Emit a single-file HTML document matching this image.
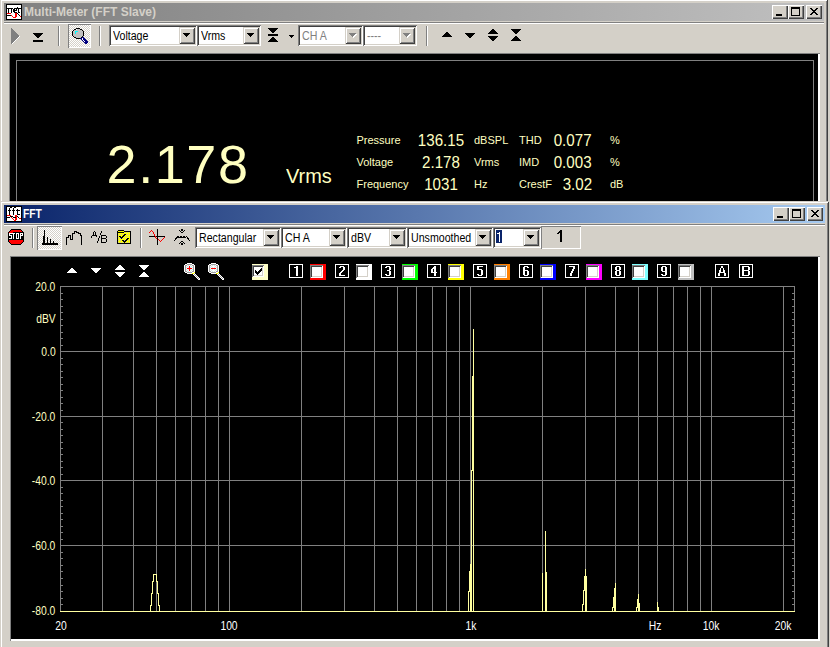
<!DOCTYPE html><html><head><meta charset="utf-8"><style>
html,body{margin:0;padding:0;}body{width:830px;height:647px;overflow:hidden;position:relative;background:#d4d0c8;font-family:"Liberation Sans",sans-serif;}
div,svg{position:absolute;box-sizing:border-box;}
</style></head><body>
<div style="left:0px;top:-1px;width:828px;height:720px;background:#d4d0c8;box-shadow:inset 1px 1px 0 #d4d0c8,inset -1px -1px 0 #404040,inset 2px 2px 0 #ffffff,inset -2px -2px 0 #808080"></div>
<div style="left:4px;top:3px;width:820px;height:18px;background:linear-gradient(to right,#808080,#c0c0c0);"></div>
<div style="left:24px;top:5.84px;font-size:12px;line-height:12px;color:#d4d0c8;font-weight:bold;white-space:nowrap;">Multi-Meter (FFT Slave)</div>
<svg style="left:6px;top:4px;" width="16" height="16" viewBox="0 0 16 16" shape-rendering="crispEdges"><rect x="0" y="0" width="16" height="1" fill="#000"/><rect x="0" y="1" width="1" height="1" fill="#000"/><rect x="1" y="1" width="14" height="1" fill="#fff"/><rect x="15" y="1" width="1" height="1" fill="#000"/><rect x="0" y="2" width="1" height="1" fill="#000"/><rect x="1" y="2" width="14" height="1" fill="#fff"/><rect x="15" y="2" width="1" height="1" fill="#000"/><rect x="0" y="3" width="1" height="1" fill="#000"/><rect x="1" y="3" width="10" height="1" fill="#fff"/><rect x="11" y="3" width="1" height="1" fill="#000"/><rect x="12" y="3" width="3" height="1" fill="#fff"/><rect x="15" y="3" width="1" height="1" fill="#000"/><rect x="0" y="4" width="7" height="1" fill="#000"/><rect x="7" y="4" width="1" height="1" fill="#fff"/><rect x="8" y="4" width="8" height="1" fill="#000"/><rect x="0" y="5" width="1" height="1" fill="#000"/><rect x="1" y="5" width="1" height="1" fill="#fff"/><rect x="2" y="5" width="1" height="1" fill="#000"/><rect x="3" y="5" width="2" height="1" fill="#fff"/><rect x="5" y="5" width="1" height="1" fill="#000"/><rect x="6" y="5" width="1" height="1" fill="#fff"/><rect x="7" y="5" width="2" height="1" fill="#000"/><rect x="9" y="5" width="1" height="1" fill="#fff"/><rect x="10" y="5" width="1" height="1" fill="#000"/><rect x="11" y="5" width="1" height="1" fill="#fff"/><rect x="12" y="5" width="1" height="1" fill="#000"/><rect x="13" y="5" width="2" height="1" fill="#fff"/><rect x="15" y="5" width="1" height="1" fill="#000"/><rect x="0" y="6" width="1" height="1" fill="#000"/><rect x="1" y="6" width="1" height="1" fill="#fff"/><rect x="2" y="6" width="1" height="1" fill="#000"/><rect x="3" y="6" width="2" height="1" fill="#fff"/><rect x="5" y="6" width="1" height="1" fill="#000"/><rect x="6" y="6" width="1" height="1" fill="#fff"/><rect x="7" y="6" width="4" height="1" fill="#000"/><rect x="11" y="6" width="1" height="1" fill="#fff"/><rect x="12" y="6" width="1" height="1" fill="#000"/><rect x="13" y="6" width="2" height="1" fill="#fff"/><rect x="15" y="6" width="1" height="1" fill="#000"/><rect x="0" y="7" width="1" height="1" fill="#000"/><rect x="1" y="7" width="1" height="1" fill="#fff"/><rect x="2" y="7" width="1" height="1" fill="#000"/><rect x="3" y="7" width="2" height="1" fill="#fff"/><rect x="5" y="7" width="1" height="1" fill="#000"/><rect x="6" y="7" width="1" height="1" fill="#fff"/><rect x="7" y="7" width="2" height="1" fill="#000"/><rect x="9" y="7" width="3" height="1" fill="#fff"/><rect x="12" y="7" width="1" height="1" fill="#000"/><rect x="13" y="7" width="2" height="1" fill="#fff"/><rect x="15" y="7" width="1" height="1" fill="#000"/><rect x="0" y="8" width="1" height="1" fill="#000"/><rect x="1" y="8" width="1" height="1" fill="#fff"/><rect x="2" y="8" width="1" height="1" fill="#000"/><rect x="3" y="8" width="2" height="1" fill="#fff"/><rect x="5" y="8" width="1" height="1" fill="#000"/><rect x="6" y="8" width="2" height="1" fill="#fff"/><rect x="8" y="8" width="3" height="1" fill="#000"/><rect x="11" y="8" width="1" height="1" fill="#fff"/><rect x="12" y="8" width="2" height="1" fill="#000"/><rect x="14" y="8" width="1" height="1" fill="#fff"/><rect x="15" y="8" width="1" height="1" fill="#000"/><rect x="0" y="9" width="1" height="1" fill="#000"/><rect x="1" y="9" width="4" height="1" fill="#f00"/><rect x="5" y="9" width="4" height="1" fill="#fff"/><rect x="9" y="9" width="2" height="1" fill="#f00"/><rect x="11" y="9" width="1" height="1" fill="#000"/><rect x="12" y="9" width="3" height="1" fill="#fff"/><rect x="15" y="9" width="1" height="1" fill="#000"/><rect x="0" y="10" width="1" height="1" fill="#000"/><rect x="1" y="10" width="8" height="1" fill="#fff"/><rect x="9" y="10" width="2" height="1" fill="#f00"/><rect x="11" y="10" width="1" height="1" fill="#fff"/><rect x="12" y="10" width="1" height="1" fill="#000"/><rect x="13" y="10" width="2" height="1" fill="#fff"/><rect x="15" y="10" width="1" height="1" fill="#000"/><rect x="0" y="11" width="5" height="1" fill="#000"/><rect x="5" y="11" width="1" height="1" fill="#f00"/><rect x="6" y="11" width="3" height="1" fill="#fff"/><rect x="9" y="11" width="2" height="1" fill="#f00"/><rect x="11" y="11" width="2" height="1" fill="#fff"/><rect x="13" y="11" width="1" height="1" fill="#000"/><rect x="14" y="11" width="1" height="1" fill="#fff"/><rect x="15" y="11" width="1" height="1" fill="#000"/><rect x="0" y="12" width="1" height="1" fill="#000"/><rect x="1" y="12" width="5" height="1" fill="#fff"/><rect x="6" y="12" width="1" height="1" fill="#f00"/><rect x="7" y="12" width="2" height="1" fill="#fff"/><rect x="9" y="12" width="2" height="1" fill="#f00"/><rect x="11" y="12" width="3" height="1" fill="#fff"/><rect x="14" y="12" width="1" height="1" fill="#f00"/><rect x="15" y="12" width="1" height="1" fill="#000"/><rect x="0" y="13" width="1" height="1" fill="#000"/><rect x="1" y="13" width="6" height="1" fill="#fff"/><rect x="7" y="13" width="3" height="1" fill="#f00"/><rect x="10" y="13" width="5" height="1" fill="#fff"/><rect x="15" y="13" width="1" height="1" fill="#000"/><rect x="0" y="14" width="1" height="1" fill="#000"/><rect x="1" y="14" width="14" height="1" fill="#fff"/><rect x="15" y="14" width="1" height="1" fill="#000"/><rect x="0" y="15" width="16" height="1" fill="#000"/></svg>
<div style="left:772px;top:5px;width:16px;height:14px;background:#d4d0c8;box-shadow:inset 1px 1px 0 #ffffff,inset -1px -1px 0 #404040,inset -2px -2px 0 #808080"></div>
<div style="left:788px;top:5px;width:16px;height:14px;background:#d4d0c8;box-shadow:inset 1px 1px 0 #ffffff,inset -1px -1px 0 #404040,inset -2px -2px 0 #808080"></div>
<div style="left:806px;top:5px;width:16px;height:14px;background:#d4d0c8;box-shadow:inset 1px 1px 0 #ffffff,inset -1px -1px 0 #404040,inset -2px -2px 0 #808080"></div>
<svg style="left:772px;top:5px;" width="16" height="14" viewBox="0 0 16 14" shape-rendering="crispEdges"><rect x="4" y="9" width="6" height="2" fill="#000"/></svg>
<svg style="left:788px;top:5px;" width="16" height="14" viewBox="0 0 16 14" shape-rendering="crispEdges"><rect x="3" y="2" width="8" height="8" fill="none" stroke="#000" stroke-width="1" transform="translate(0.5 0.5)"/><rect x="3" y="2" width="9" height="2" fill="#000"/></svg>
<svg style="left:810px;top:8px;" width="8" height="7" viewBox="0 0 8 7" shape-rendering="crispEdges"><rect x="0" y="0" width="2" height="1" fill="#000"/><rect x="6" y="0" width="2" height="1" fill="#000"/><rect x="1" y="1" width="2" height="1" fill="#000"/><rect x="5" y="1" width="2" height="1" fill="#000"/><rect x="2" y="2" width="4" height="1" fill="#000"/><rect x="3" y="3" width="2" height="1" fill="#000"/><rect x="2" y="4" width="4" height="1" fill="#000"/><rect x="1" y="5" width="2" height="1" fill="#000"/><rect x="5" y="5" width="2" height="1" fill="#000"/><rect x="0" y="6" width="2" height="1" fill="#000"/><rect x="6" y="6" width="2" height="1" fill="#000"/></svg>
<div style="left:4px;top:22px;width:820px;height:1px;background:#808080;"></div>
<div style="left:4px;top:23px;width:820px;height:1px;background:#ffffff;"></div>
<svg style="left:11px;top:28px;" width="10" height="16" viewBox="0 0 10 16" shape-rendering="crispEdges"><rect x="0" y="0" width="1" height="1" fill="#808080"/><rect x="0" y="1" width="2" height="1" fill="#808080"/><rect x="0" y="2" width="3" height="1" fill="#808080"/><rect x="0" y="3" width="4" height="1" fill="#808080"/><rect x="0" y="4" width="5" height="1" fill="#808080"/><rect x="0" y="5" width="6" height="1" fill="#808080"/><rect x="0" y="6" width="7" height="1" fill="#808080"/><rect x="0" y="7" width="8" height="1" fill="#808080"/><rect x="0" y="8" width="8" height="1" fill="#808080"/><rect x="8" y="8" width="1" height="1" fill="#fff"/><rect x="0" y="9" width="7" height="1" fill="#808080"/><rect x="7" y="9" width="1" height="1" fill="#fff"/><rect x="0" y="10" width="6" height="1" fill="#808080"/><rect x="6" y="10" width="1" height="1" fill="#fff"/><rect x="0" y="11" width="5" height="1" fill="#808080"/><rect x="5" y="11" width="1" height="1" fill="#fff"/><rect x="0" y="12" width="4" height="1" fill="#808080"/><rect x="4" y="12" width="1" height="1" fill="#fff"/><rect x="0" y="13" width="3" height="1" fill="#808080"/><rect x="3" y="13" width="1" height="1" fill="#fff"/><rect x="0" y="14" width="2" height="1" fill="#808080"/><rect x="2" y="14" width="1" height="1" fill="#fff"/><rect x="0" y="15" width="1" height="1" fill="#808080"/><rect x="1" y="15" width="1" height="1" fill="#fff"/></svg>
<svg style="left:33px;top:33px;" width="10" height="5" viewBox="0 0 10 5" shape-rendering="crispEdges"><rect x="0" y="0" width="10" height="1" fill="#000"/><rect x="1" y="1" width="8" height="1" fill="#000"/><rect x="2" y="2" width="6" height="1" fill="#000"/><rect x="3" y="3" width="4" height="1" fill="#000"/><rect x="4" y="4" width="2" height="1" fill="#000"/></svg>
<div style="left:33px;top:40px;width:10px;height:2px;background:#000;"></div>
<div style="left:58px;top:26px;width:1px;height:20px;background:#808080;"></div>
<div style="left:59px;top:26px;width:1px;height:20px;background:#ffffff;"></div>
<div style="left:68px;top:24px;width:23px;height:24px;background-color:#fff;background-image:repeating-conic-gradient(#d4d0c8 0 25%,#fff 0 50%);background-size:2px 2px;box-shadow:inset 1px 1px 0 #808080,inset -1px -1px 0 #ffffff"></div>
<svg style="left:68px;top:24px;" width="24" height="20" viewBox="0 0 24 20" shape-rendering="crispEdges"><rect x="8" y="4" width="4" height="1" fill="#000"/><rect x="6" y="5" width="2" height="1" fill="#000"/><rect x="8" y="5" width="1" height="1" fill="#fff"/><rect x="9" y="5" width="3" height="1" fill="#c0c0c0"/><rect x="12" y="5" width="2" height="1" fill="#000"/><rect x="5" y="6" width="1" height="1" fill="#000"/><rect x="6" y="6" width="8" height="1" fill="#c0c0c0"/><rect x="14" y="6" width="1" height="1" fill="#000"/><rect x="4" y="7" width="1" height="1" fill="#000"/><rect x="5" y="7" width="2" height="1" fill="#c0c0c0"/><rect x="7" y="7" width="3" height="1" fill="#0ff"/><rect x="10" y="7" width="5" height="1" fill="#c0c0c0"/><rect x="15" y="7" width="1" height="1" fill="#000"/><rect x="4" y="8" width="1" height="1" fill="#000"/><rect x="5" y="8" width="2" height="1" fill="#c0c0c0"/><rect x="7" y="8" width="1" height="1" fill="#0ff"/><rect x="8" y="8" width="7" height="1" fill="#c0c0c0"/><rect x="15" y="8" width="1" height="1" fill="#000"/><rect x="4" y="9" width="1" height="1" fill="#000"/><rect x="5" y="9" width="2" height="1" fill="#c0c0c0"/><rect x="7" y="9" width="1" height="1" fill="#0ff"/><rect x="8" y="9" width="7" height="1" fill="#c0c0c0"/><rect x="15" y="9" width="1" height="1" fill="#000"/><rect x="4" y="10" width="1" height="1" fill="#000"/><rect x="5" y="10" width="10" height="1" fill="#c0c0c0"/><rect x="15" y="10" width="1" height="1" fill="#000"/><rect x="4" y="11" width="1" height="1" fill="#000"/><rect x="5" y="11" width="10" height="1" fill="#c0c0c0"/><rect x="15" y="11" width="1" height="1" fill="#000"/><rect x="5" y="12" width="1" height="1" fill="#000"/><rect x="6" y="12" width="8" height="1" fill="#c0c0c0"/><rect x="14" y="12" width="1" height="1" fill="#000"/><rect x="6" y="13" width="2" height="1" fill="#000"/><rect x="8" y="13" width="5" height="1" fill="#c0c0c0"/><rect x="13" y="13" width="1" height="1" fill="#000"/><rect x="14" y="13" width="2" height="1" fill="#000080"/><rect x="8" y="14" width="4" height="1" fill="#000"/><rect x="12" y="14" width="2" height="1" fill="#000080"/><rect x="14" y="14" width="1" height="1" fill="#fff"/><rect x="15" y="14" width="2" height="1" fill="#000080"/><rect x="13" y="15" width="1" height="1" fill="#000080"/><rect x="14" y="15" width="1" height="1" fill="#fff"/><rect x="15" y="15" width="3" height="1" fill="#000080"/><rect x="14" y="16" width="1" height="1" fill="#000080"/><rect x="15" y="16" width="1" height="1" fill="#fff"/><rect x="16" y="16" width="3" height="1" fill="#000080"/><rect x="15" y="17" width="1" height="1" fill="#000080"/><rect x="16" y="17" width="1" height="1" fill="#fff"/><rect x="17" y="17" width="3" height="1" fill="#000080"/><rect x="16" y="18" width="4" height="1" fill="#000080"/><rect x="17" y="19" width="2" height="1" fill="#000080"/></svg>
<div style="left:99px;top:26px;width:1px;height:20px;background:#808080;"></div>
<div style="left:100px;top:26px;width:1px;height:20px;background:#ffffff;"></div>
<div style="left:109px;top:25px;width:88px;height:21px;background:#fff;box-shadow:inset 1px 1px 0 #808080,inset -1px -1px 0 #ffffff,inset 2px 2px 0 #404040,inset -2px -2px 0 #d4d0c8"></div>
<div style="left:179px;top:27px;width:16px;height:17px;background:#d4d0c8;box-shadow:inset 1px 1px 0 #d4d0c8,inset -1px -1px 0 #404040,inset 2px 2px 0 #ffffff,inset -2px -2px 0 #808080"></div>
<svg style="left:183px;top:33px;" width="9" height="6" viewBox="0 0 9 6" shape-rendering="crispEdges"><path d="M0 0h7v1h-1v1h-1v1h-1v1h-1v-1h-1v-1h-1v-1h-1z" fill="#000"/></svg>
<div style="left:113px;top:29.84px;font-size:12px;line-height:12px;color:#000;font-weight:normal;white-space:nowrap;transform:scaleX(.885);transform-origin:0 50%">Voltage</div>
<div style="left:197px;top:25px;width:64px;height:21px;background:#fff;box-shadow:inset 1px 1px 0 #808080,inset -1px -1px 0 #ffffff,inset 2px 2px 0 #404040,inset -2px -2px 0 #d4d0c8"></div>
<div style="left:243px;top:27px;width:16px;height:17px;background:#d4d0c8;box-shadow:inset 1px 1px 0 #d4d0c8,inset -1px -1px 0 #404040,inset 2px 2px 0 #ffffff,inset -2px -2px 0 #808080"></div>
<svg style="left:247px;top:33px;" width="9" height="6" viewBox="0 0 9 6" shape-rendering="crispEdges"><path d="M0 0h7v1h-1v1h-1v1h-1v1h-1v-1h-1v-1h-1v-1h-1z" fill="#000"/></svg>
<div style="left:201px;top:29.84px;font-size:12px;line-height:12px;color:#000;font-weight:normal;white-space:nowrap;transform:scaleX(.885);transform-origin:0 50%">Vrms</div>
<svg style="left:268px;top:28px;" width="10" height="5" viewBox="0 0 10 5" shape-rendering="crispEdges"><rect x="0" y="0" width="10" height="1" fill="#000"/><rect x="1" y="1" width="8" height="1" fill="#000"/><rect x="2" y="2" width="6" height="1" fill="#000"/><rect x="3" y="3" width="4" height="1" fill="#000"/><rect x="4" y="4" width="2" height="1" fill="#000"/></svg>
<div style="left:268px;top:34px;width:10px;height:2px;background:#000;"></div>
<svg style="left:268px;top:37px;" width="10" height="5" viewBox="0 0 10 5" shape-rendering="crispEdges"><rect x="4" y="0" width="2" height="1" fill="#000"/><rect x="3" y="1" width="4" height="1" fill="#000"/><rect x="2" y="2" width="6" height="1" fill="#000"/><rect x="1" y="3" width="8" height="1" fill="#000"/><rect x="0" y="4" width="10" height="1" fill="#000"/></svg>
<svg style="left:289px;top:35px;" width="5" height="3" viewBox="0 0 5 3" shape-rendering="crispEdges"><rect x="0" y="0" width="5" height="1" fill="#000"/><rect x="1" y="1" width="3" height="1" fill="#000"/><rect x="2" y="2" width="1" height="1" fill="#000"/></svg>
<div style="left:298px;top:25px;width:65px;height:21px;background:#fff;box-shadow:inset 1px 1px 0 #808080,inset -1px -1px 0 #ffffff,inset 2px 2px 0 #404040,inset -2px -2px 0 #d4d0c8"></div>
<div style="left:345px;top:27px;width:16px;height:17px;background:#d4d0c8;box-shadow:inset 1px 1px 0 #d4d0c8,inset -1px -1px 0 #404040,inset 2px 2px 0 #ffffff,inset -2px -2px 0 #808080"></div>
<svg style="left:349px;top:33px;" width="9" height="6" viewBox="0 0 9 6" shape-rendering="crispEdges"><path d="M1 1h7v1h-1v1h-1v1h-1v1h-1v-1h-1v-1h-1v-1h-1z" fill="#fff"/><path d="M0 0h7v1h-1v1h-1v1h-1v1h-1v-1h-1v-1h-1v-1h-1z" fill="#808080"/></svg>
<div style="left:302px;top:29.84px;font-size:12px;line-height:12px;color:#808080;font-weight:normal;white-space:nowrap;transform:scaleX(.885);transform-origin:0 50%">CH A</div>
<div style="left:363px;top:25px;width:54px;height:21px;background:#fff;box-shadow:inset 1px 1px 0 #808080,inset -1px -1px 0 #ffffff,inset 2px 2px 0 #404040,inset -2px -2px 0 #d4d0c8"></div>
<div style="left:399px;top:27px;width:16px;height:17px;background:#d4d0c8;box-shadow:inset 1px 1px 0 #d4d0c8,inset -1px -1px 0 #404040,inset 2px 2px 0 #ffffff,inset -2px -2px 0 #808080"></div>
<svg style="left:403px;top:33px;" width="9" height="6" viewBox="0 0 9 6" shape-rendering="crispEdges"><path d="M1 1h7v1h-1v1h-1v1h-1v1h-1v-1h-1v-1h-1v-1h-1z" fill="#fff"/><path d="M0 0h7v1h-1v1h-1v1h-1v1h-1v-1h-1v-1h-1v-1h-1z" fill="#808080"/></svg>
<div style="left:367px;top:29.84px;font-size:12px;line-height:12px;color:#808080;font-weight:normal;white-space:nowrap;transform:scaleX(.885);transform-origin:0 50%">----</div>
<div style="left:426px;top:26px;width:1px;height:20px;background:#808080;"></div>
<div style="left:427px;top:26px;width:1px;height:20px;background:#ffffff;"></div>
<svg style="left:442px;top:32px;" width="10" height="5" viewBox="0 0 10 5" shape-rendering="crispEdges"><rect x="4" y="0" width="2" height="1" fill="#000"/><rect x="3" y="1" width="4" height="1" fill="#000"/><rect x="2" y="2" width="6" height="1" fill="#000"/><rect x="1" y="3" width="8" height="1" fill="#000"/><rect x="0" y="4" width="10" height="1" fill="#000"/></svg>
<svg style="left:465px;top:33px;" width="10" height="5" viewBox="0 0 10 5" shape-rendering="crispEdges"><rect x="0" y="0" width="10" height="1" fill="#000"/><rect x="1" y="1" width="8" height="1" fill="#000"/><rect x="2" y="2" width="6" height="1" fill="#000"/><rect x="3" y="3" width="4" height="1" fill="#000"/><rect x="4" y="4" width="2" height="1" fill="#000"/></svg>
<svg style="left:488px;top:29px;" width="10" height="5" viewBox="0 0 10 5" shape-rendering="crispEdges"><rect x="4" y="0" width="2" height="1" fill="#000"/><rect x="3" y="1" width="4" height="1" fill="#000"/><rect x="2" y="2" width="6" height="1" fill="#000"/><rect x="1" y="3" width="8" height="1" fill="#000"/><rect x="0" y="4" width="10" height="1" fill="#000"/></svg>
<svg style="left:488px;top:36px;" width="10" height="5" viewBox="0 0 10 5" shape-rendering="crispEdges"><rect x="0" y="0" width="10" height="1" fill="#000"/><rect x="1" y="1" width="8" height="1" fill="#000"/><rect x="2" y="2" width="6" height="1" fill="#000"/><rect x="3" y="3" width="4" height="1" fill="#000"/><rect x="4" y="4" width="2" height="1" fill="#000"/></svg>
<svg style="left:511px;top:29px;" width="10" height="5" viewBox="0 0 10 5" shape-rendering="crispEdges"><rect x="0" y="0" width="10" height="1" fill="#000"/><rect x="1" y="1" width="8" height="1" fill="#000"/><rect x="2" y="2" width="6" height="1" fill="#000"/><rect x="3" y="3" width="4" height="1" fill="#000"/><rect x="4" y="4" width="2" height="1" fill="#000"/></svg>
<svg style="left:511px;top:36px;" width="10" height="5" viewBox="0 0 10 5" shape-rendering="crispEdges"><rect x="4" y="0" width="2" height="1" fill="#000"/><rect x="3" y="1" width="4" height="1" fill="#000"/><rect x="2" y="2" width="6" height="1" fill="#000"/><rect x="1" y="3" width="8" height="1" fill="#000"/><rect x="0" y="4" width="10" height="1" fill="#000"/></svg>
<div style="left:9px;top:53px;width:811px;height:160px;background:#000;box-shadow:inset 1px 1px 0 #808080,inset -1px -1px 0 #ffffff,inset -2px -2px 0 #ffffff"></div>
<div style="left:16px;top:60px;width:798px;height:160px;border:1px solid #808080"></div>
<div style="left:106.5px;top:136.79px;font-size:54px;line-height:54px;color:#ffffc0;font-weight:normal;white-space:nowrap;letter-spacing:1.6px">2.178</div>
<div style="left:286px;top:165.22px;font-size:21px;line-height:21px;color:#ffffc0;font-weight:normal;white-space:nowrap;transform:scaleX(.95);transform-origin:0 50%">Vrms</div>
<div style="left:356.5px;top:134.69px;font-size:11px;line-height:11px;color:#ffffc0;font-weight:normal;white-space:nowrap;">Pressure</div>
<div style="left:241px;width:400px;text-align:center;top:131.61px;font-size:17px;line-height:17px;color:#ffffc0;font-weight:normal;white-space:nowrap;transform:scaleX(.89)">136.15</div>
<div style="left:474px;top:134.69px;font-size:11px;line-height:11px;color:#ffffc0;font-weight:normal;white-space:nowrap;">dBSPL</div>
<div style="left:519px;top:134.69px;font-size:11px;line-height:11px;color:#ffffc0;font-weight:normal;white-space:nowrap;">THD</div>
<div style="right:238px;top:131.61px;font-size:17px;line-height:17px;color:#ffffc0;font-weight:normal;white-space:nowrap;transform:scaleX(.89);transform-origin:100% 50%">0.077</div>
<div style="left:610px;top:134.69px;font-size:11px;line-height:11px;color:#ffffc0;font-weight:normal;white-space:nowrap;">%</div>
<div style="left:356.5px;top:156.69px;font-size:11px;line-height:11px;color:#ffffc0;font-weight:normal;white-space:nowrap;">Voltage</div>
<div style="left:241px;width:400px;text-align:center;top:153.61px;font-size:17px;line-height:17px;color:#ffffc0;font-weight:normal;white-space:nowrap;transform:scaleX(.89)">2.178</div>
<div style="left:474px;top:156.69px;font-size:11px;line-height:11px;color:#ffffc0;font-weight:normal;white-space:nowrap;">Vrms</div>
<div style="left:519px;top:156.69px;font-size:11px;line-height:11px;color:#ffffc0;font-weight:normal;white-space:nowrap;">IMD</div>
<div style="right:238px;top:153.61px;font-size:17px;line-height:17px;color:#ffffc0;font-weight:normal;white-space:nowrap;transform:scaleX(.89);transform-origin:100% 50%">0.003</div>
<div style="left:610px;top:156.69px;font-size:11px;line-height:11px;color:#ffffc0;font-weight:normal;white-space:nowrap;">%</div>
<div style="left:356.5px;top:178.69px;font-size:11px;line-height:11px;color:#ffffc0;font-weight:normal;white-space:nowrap;">Frequency</div>
<div style="left:241px;width:400px;text-align:center;top:175.61px;font-size:17px;line-height:17px;color:#ffffc0;font-weight:normal;white-space:nowrap;transform:scaleX(.89)">1031</div>
<div style="left:474px;top:178.69px;font-size:11px;line-height:11px;color:#ffffc0;font-weight:normal;white-space:nowrap;">Hz</div>
<div style="left:519px;top:178.69px;font-size:11px;line-height:11px;color:#ffffc0;font-weight:normal;white-space:nowrap;">CrestF</div>
<div style="right:238px;top:175.61px;font-size:17px;line-height:17px;color:#ffffc0;font-weight:normal;white-space:nowrap;transform:scaleX(.89);transform-origin:100% 50%">3.02</div>
<div style="left:610px;top:178.69px;font-size:11px;line-height:11px;color:#ffffc0;font-weight:normal;white-space:nowrap;">dB</div>
<div style="left:0px;top:201px;width:829px;height:520px;background:#d4d0c8;box-shadow:inset 1px 1px 0 #d4d0c8,inset -1px -1px 0 #404040,inset 2px 2px 0 #ffffff,inset -2px -2px 0 #808080"></div>
<div style="left:4px;top:205px;width:821px;height:18px;background:linear-gradient(to right,#0a246a,#a6caf0);"></div>
<div style="left:23px;top:207.84px;font-size:12px;line-height:12px;color:#fff;font-weight:bold;white-space:nowrap;transform:scaleX(.86);transform-origin:0 50%">FFT</div>
<svg style="left:6px;top:206px;" width="16" height="16" viewBox="0 0 16 16" shape-rendering="crispEdges"><rect x="0" y="0" width="16" height="1" fill="#000"/><rect x="0" y="1" width="1" height="1" fill="#000"/><rect x="1" y="1" width="3" height="1" fill="#fff"/><rect x="4" y="1" width="2" height="1" fill="#000"/><rect x="6" y="1" width="2" height="1" fill="#fff"/><rect x="8" y="1" width="2" height="1" fill="#000"/><rect x="10" y="1" width="5" height="1" fill="#fff"/><rect x="15" y="1" width="1" height="1" fill="#000"/><rect x="0" y="2" width="1" height="1" fill="#000"/><rect x="1" y="2" width="2" height="1" fill="#fff"/><rect x="3" y="2" width="1" height="1" fill="#000"/><rect x="4" y="2" width="3" height="1" fill="#fff"/><rect x="7" y="2" width="1" height="1" fill="#000"/><rect x="8" y="2" width="7" height="1" fill="#fff"/><rect x="15" y="2" width="1" height="1" fill="#000"/><rect x="0" y="3" width="1" height="1" fill="#000"/><rect x="1" y="3" width="2" height="1" fill="#fff"/><rect x="3" y="3" width="1" height="1" fill="#000"/><rect x="4" y="3" width="3" height="1" fill="#fff"/><rect x="7" y="3" width="1" height="1" fill="#000"/><rect x="8" y="3" width="3" height="1" fill="#fff"/><rect x="11" y="3" width="1" height="1" fill="#000"/><rect x="12" y="3" width="3" height="1" fill="#fff"/><rect x="15" y="3" width="1" height="1" fill="#000"/><rect x="0" y="4" width="1" height="1" fill="#000"/><rect x="1" y="4" width="1" height="1" fill="#fff"/><rect x="2" y="4" width="3" height="1" fill="#000"/><rect x="5" y="4" width="1" height="1" fill="#fff"/><rect x="6" y="4" width="3" height="1" fill="#000"/><rect x="9" y="4" width="1" height="1" fill="#fff"/><rect x="10" y="4" width="4" height="1" fill="#000"/><rect x="14" y="4" width="1" height="1" fill="#fff"/><rect x="15" y="4" width="1" height="1" fill="#000"/><rect x="0" y="5" width="1" height="1" fill="#000"/><rect x="1" y="5" width="2" height="1" fill="#fff"/><rect x="3" y="5" width="1" height="1" fill="#000"/><rect x="4" y="5" width="3" height="1" fill="#fff"/><rect x="7" y="5" width="1" height="1" fill="#000"/><rect x="8" y="5" width="3" height="1" fill="#fff"/><rect x="11" y="5" width="1" height="1" fill="#000"/><rect x="12" y="5" width="3" height="1" fill="#fff"/><rect x="15" y="5" width="1" height="1" fill="#000"/><rect x="0" y="6" width="1" height="1" fill="#000"/><rect x="1" y="6" width="2" height="1" fill="#fff"/><rect x="3" y="6" width="1" height="1" fill="#000"/><rect x="4" y="6" width="3" height="1" fill="#fff"/><rect x="7" y="6" width="1" height="1" fill="#000"/><rect x="8" y="6" width="3" height="1" fill="#fff"/><rect x="11" y="6" width="1" height="1" fill="#000"/><rect x="12" y="6" width="3" height="1" fill="#fff"/><rect x="15" y="6" width="1" height="1" fill="#000"/><rect x="0" y="7" width="1" height="1" fill="#000"/><rect x="1" y="7" width="2" height="1" fill="#fff"/><rect x="3" y="7" width="1" height="1" fill="#000"/><rect x="4" y="7" width="3" height="1" fill="#fff"/><rect x="7" y="7" width="1" height="1" fill="#000"/><rect x="8" y="7" width="3" height="1" fill="#fff"/><rect x="11" y="7" width="1" height="1" fill="#000"/><rect x="12" y="7" width="3" height="1" fill="#fff"/><rect x="15" y="7" width="1" height="1" fill="#000"/><rect x="0" y="8" width="1" height="1" fill="#000"/><rect x="1" y="8" width="2" height="1" fill="#fff"/><rect x="3" y="8" width="1" height="1" fill="#000"/><rect x="4" y="8" width="3" height="1" fill="#fff"/><rect x="7" y="8" width="1" height="1" fill="#000"/><rect x="8" y="8" width="3" height="1" fill="#fff"/><rect x="11" y="8" width="3" height="1" fill="#000"/><rect x="14" y="8" width="1" height="1" fill="#fff"/><rect x="15" y="8" width="1" height="1" fill="#000"/><rect x="0" y="9" width="1" height="1" fill="#000"/><rect x="1" y="9" width="4" height="1" fill="#f00"/><rect x="5" y="9" width="4" height="1" fill="#fff"/><rect x="9" y="9" width="2" height="1" fill="#f00"/><rect x="11" y="9" width="4" height="1" fill="#fff"/><rect x="15" y="9" width="1" height="1" fill="#000"/><rect x="0" y="10" width="1" height="1" fill="#000"/><rect x="1" y="10" width="3" height="1" fill="#fff"/><rect x="4" y="10" width="3" height="1" fill="#000"/><rect x="7" y="10" width="2" height="1" fill="#fff"/><rect x="9" y="10" width="2" height="1" fill="#f00"/><rect x="11" y="10" width="1" height="1" fill="#000"/><rect x="12" y="10" width="3" height="1" fill="#fff"/><rect x="15" y="10" width="1" height="1" fill="#000"/><rect x="0" y="11" width="4" height="1" fill="#000"/><rect x="4" y="11" width="1" height="1" fill="#fff"/><rect x="5" y="11" width="1" height="1" fill="#f00"/><rect x="6" y="11" width="1" height="1" fill="#fff"/><rect x="7" y="11" width="3" height="1" fill="#000"/><rect x="10" y="11" width="1" height="1" fill="#f00"/><rect x="11" y="11" width="1" height="1" fill="#fff"/><rect x="12" y="11" width="1" height="1" fill="#000"/><rect x="13" y="11" width="2" height="1" fill="#fff"/><rect x="15" y="11" width="1" height="1" fill="#000"/><rect x="0" y="12" width="1" height="1" fill="#000"/><rect x="1" y="12" width="5" height="1" fill="#fff"/><rect x="6" y="12" width="1" height="1" fill="#f00"/><rect x="7" y="12" width="2" height="1" fill="#fff"/><rect x="9" y="12" width="2" height="1" fill="#f00"/><rect x="11" y="12" width="2" height="1" fill="#fff"/><rect x="13" y="12" width="2" height="1" fill="#f00"/><rect x="15" y="12" width="1" height="1" fill="#000"/><rect x="0" y="13" width="1" height="1" fill="#000"/><rect x="1" y="13" width="6" height="1" fill="#fff"/><rect x="7" y="13" width="1" height="1" fill="#f00"/><rect x="8" y="13" width="1" height="1" fill="#fff"/><rect x="9" y="13" width="2" height="1" fill="#f00"/><rect x="11" y="13" width="4" height="1" fill="#fff"/><rect x="15" y="13" width="1" height="1" fill="#000"/><rect x="0" y="14" width="1" height="1" fill="#000"/><rect x="1" y="14" width="7" height="1" fill="#fff"/><rect x="8" y="14" width="2" height="1" fill="#f00"/><rect x="10" y="14" width="5" height="1" fill="#fff"/><rect x="15" y="14" width="1" height="1" fill="#000"/><rect x="0" y="15" width="16" height="1" fill="#000"/></svg>
<div style="left:773px;top:207px;width:16px;height:14px;background:#d4d0c8;box-shadow:inset 1px 1px 0 #ffffff,inset -1px -1px 0 #404040,inset -2px -2px 0 #808080"></div>
<div style="left:789px;top:207px;width:16px;height:14px;background:#d4d0c8;box-shadow:inset 1px 1px 0 #ffffff,inset -1px -1px 0 #404040,inset -2px -2px 0 #808080"></div>
<div style="left:807px;top:207px;width:16px;height:14px;background:#d4d0c8;box-shadow:inset 1px 1px 0 #ffffff,inset -1px -1px 0 #404040,inset -2px -2px 0 #808080"></div>
<svg style="left:773px;top:207px;" width="16" height="14" viewBox="0 0 16 14" shape-rendering="crispEdges"><rect x="4" y="9" width="6" height="2" fill="#000"/></svg>
<svg style="left:789px;top:207px;" width="16" height="14" viewBox="0 0 16 14" shape-rendering="crispEdges"><rect x="3" y="2" width="8" height="8" fill="none" stroke="#000" stroke-width="1" transform="translate(0.5 0.5)"/><rect x="3" y="2" width="9" height="2" fill="#000"/></svg>
<svg style="left:811px;top:210px;" width="8" height="7" viewBox="0 0 8 7" shape-rendering="crispEdges"><rect x="0" y="0" width="2" height="1" fill="#000"/><rect x="6" y="0" width="2" height="1" fill="#000"/><rect x="1" y="1" width="2" height="1" fill="#000"/><rect x="5" y="1" width="2" height="1" fill="#000"/><rect x="2" y="2" width="4" height="1" fill="#000"/><rect x="3" y="3" width="2" height="1" fill="#000"/><rect x="2" y="4" width="4" height="1" fill="#000"/><rect x="1" y="5" width="2" height="1" fill="#000"/><rect x="5" y="5" width="2" height="1" fill="#000"/><rect x="0" y="6" width="2" height="1" fill="#000"/><rect x="6" y="6" width="2" height="1" fill="#000"/></svg>
<div style="left:4px;top:224px;width:821px;height:1px;background:#808080;"></div>
<div style="left:4px;top:225px;width:821px;height:1px;background:#ffffff;"></div>
<svg style="left:6px;top:227px;" width="20" height="20" viewBox="0 0 20 20" shape-rendering="crispEdges"><rect x="5" y="2" width="10" height="1" fill="#000"/><rect x="4" y="3" width="1" height="1" fill="#000"/><rect x="5" y="3" width="10" height="1" fill="#f00"/><rect x="15" y="3" width="1" height="1" fill="#000"/><rect x="3" y="4" width="1" height="1" fill="#000"/><rect x="4" y="4" width="12" height="1" fill="#f00"/><rect x="16" y="4" width="1" height="1" fill="#000"/><rect x="2" y="5" width="1" height="1" fill="#000"/><rect x="3" y="5" width="4" height="1" fill="#f00"/><rect x="7" y="5" width="11" height="1" fill="#000"/><rect x="2" y="6" width="1" height="1" fill="#000"/><rect x="3" y="6" width="6" height="1" fill="#fff"/><rect x="9" y="6" width="1" height="1" fill="#000"/><rect x="10" y="6" width="3" height="1" fill="#fff"/><rect x="13" y="6" width="1" height="1" fill="#000"/><rect x="14" y="6" width="3" height="1" fill="#fff"/><rect x="17" y="6" width="1" height="1" fill="#000"/><rect x="2" y="7" width="1" height="1" fill="#000"/><rect x="3" y="7" width="1" height="1" fill="#fff"/><rect x="4" y="7" width="3" height="1" fill="#000"/><rect x="7" y="7" width="1" height="1" fill="#fff"/><rect x="8" y="7" width="2" height="1" fill="#000"/><rect x="10" y="7" width="1" height="1" fill="#fff"/><rect x="11" y="7" width="1" height="1" fill="#000"/><rect x="12" y="7" width="1" height="1" fill="#fff"/><rect x="13" y="7" width="1" height="1" fill="#000"/><rect x="14" y="7" width="1" height="1" fill="#fff"/><rect x="15" y="7" width="1" height="1" fill="#000"/><rect x="16" y="7" width="1" height="1" fill="#fff"/><rect x="17" y="7" width="1" height="1" fill="#000"/><rect x="2" y="8" width="1" height="1" fill="#000"/><rect x="3" y="8" width="3" height="1" fill="#fff"/><rect x="6" y="8" width="1" height="1" fill="#000"/><rect x="7" y="8" width="1" height="1" fill="#fff"/><rect x="8" y="8" width="2" height="1" fill="#000"/><rect x="10" y="8" width="1" height="1" fill="#fff"/><rect x="11" y="8" width="1" height="1" fill="#000"/><rect x="12" y="8" width="1" height="1" fill="#fff"/><rect x="13" y="8" width="1" height="1" fill="#000"/><rect x="14" y="8" width="3" height="1" fill="#fff"/><rect x="17" y="8" width="1" height="1" fill="#000"/><rect x="2" y="9" width="3" height="1" fill="#000"/><rect x="5" y="9" width="1" height="1" fill="#fff"/><rect x="6" y="9" width="1" height="1" fill="#000"/><rect x="7" y="9" width="1" height="1" fill="#fff"/><rect x="8" y="9" width="2" height="1" fill="#000"/><rect x="10" y="9" width="1" height="1" fill="#fff"/><rect x="11" y="9" width="1" height="1" fill="#000"/><rect x="12" y="9" width="1" height="1" fill="#fff"/><rect x="13" y="9" width="1" height="1" fill="#000"/><rect x="14" y="9" width="1" height="1" fill="#fff"/><rect x="15" y="9" width="3" height="1" fill="#000"/><rect x="2" y="10" width="3" height="1" fill="#000"/><rect x="5" y="10" width="1" height="1" fill="#fff"/><rect x="6" y="10" width="1" height="1" fill="#000"/><rect x="7" y="10" width="1" height="1" fill="#fff"/><rect x="8" y="10" width="2" height="1" fill="#000"/><rect x="10" y="10" width="1" height="1" fill="#fff"/><rect x="11" y="10" width="1" height="1" fill="#000"/><rect x="12" y="10" width="1" height="1" fill="#fff"/><rect x="13" y="10" width="1" height="1" fill="#000"/><rect x="14" y="10" width="1" height="1" fill="#fff"/><rect x="15" y="10" width="3" height="1" fill="#000"/><rect x="2" y="11" width="1" height="1" fill="#000"/><rect x="3" y="11" width="3" height="1" fill="#fff"/><rect x="6" y="11" width="1" height="1" fill="#000"/><rect x="7" y="11" width="1" height="1" fill="#fff"/><rect x="8" y="11" width="2" height="1" fill="#000"/><rect x="10" y="11" width="3" height="1" fill="#fff"/><rect x="13" y="11" width="1" height="1" fill="#000"/><rect x="14" y="11" width="1" height="1" fill="#fff"/><rect x="15" y="11" width="3" height="1" fill="#000"/><rect x="2" y="12" width="16" height="1" fill="#000"/><rect x="2" y="13" width="1" height="1" fill="#000"/><rect x="3" y="13" width="14" height="1" fill="#f00"/><rect x="17" y="13" width="1" height="1" fill="#000"/><rect x="2" y="14" width="1" height="1" fill="#000"/><rect x="3" y="14" width="14" height="1" fill="#f00"/><rect x="17" y="14" width="1" height="1" fill="#000"/><rect x="3" y="15" width="1" height="1" fill="#000"/><rect x="4" y="15" width="12" height="1" fill="#f00"/><rect x="16" y="15" width="1" height="1" fill="#000"/><rect x="4" y="16" width="1" height="1" fill="#000"/><rect x="5" y="16" width="10" height="1" fill="#f00"/><rect x="15" y="16" width="1" height="1" fill="#000"/><rect x="5" y="17" width="10" height="1" fill="#000"/></svg>
<div style="left:32px;top:228px;width:1px;height:20px;background:#808080;"></div>
<div style="left:33px;top:228px;width:1px;height:20px;background:#ffffff;"></div>
<div style="left:37px;top:226px;width:25px;height:24px;background-color:#fff;background-image:repeating-conic-gradient(#d4d0c8 0 25%,#fff 0 50%);background-size:2px 2px;box-shadow:inset 1px 1px 0 #808080,inset -1px -1px 0 #ffffff"></div>
<svg style="left:42px;top:229px;" width="17" height="17" viewBox="0 0 17 17" shape-rendering="crispEdges"><path d="M0 14h16v2h-16z M2 1h1v13h-2z M5 8h1v6h-1z M8 10h1v4h-1z M11 12h1v2h-1z" fill="#000"/></svg>
<svg style="left:64px;top:231px;" width="20" height="14" viewBox="0 0 20 14" shape-rendering="crispEdges"><rect x="10" y="0" width="3" height="1" fill="#000"/><rect x="10" y="1" width="1" height="1" fill="#000"/><rect x="12" y="1" width="3" height="1" fill="#000"/><rect x="8" y="2" width="3" height="1" fill="#000"/><rect x="14" y="2" width="3" height="1" fill="#000"/><rect x="8" y="3" width="1" height="1" fill="#000"/><rect x="16" y="3" width="1" height="1" fill="#000"/><rect x="4" y="4" width="3" height="1" fill="#000"/><rect x="8" y="4" width="1" height="1" fill="#000"/><rect x="16" y="4" width="2" height="1" fill="#000"/><rect x="4" y="5" width="1" height="1" fill="#000"/><rect x="6" y="5" width="1" height="1" fill="#000"/><rect x="8" y="5" width="1" height="1" fill="#000"/><rect x="17" y="5" width="1" height="1" fill="#000"/><rect x="2" y="6" width="3" height="1" fill="#000"/><rect x="6" y="6" width="1" height="1" fill="#000"/><rect x="8" y="6" width="1" height="1" fill="#000"/><rect x="17" y="6" width="1" height="1" fill="#000"/><rect x="2" y="7" width="1" height="1" fill="#000"/><rect x="6" y="7" width="1" height="1" fill="#000"/><rect x="8" y="7" width="1" height="1" fill="#000"/><rect x="17" y="7" width="1" height="1" fill="#000"/><rect x="2" y="8" width="1" height="1" fill="#000"/><rect x="6" y="8" width="3" height="1" fill="#000"/><rect x="17" y="8" width="1" height="1" fill="#000"/><rect x="2" y="9" width="1" height="1" fill="#000"/><rect x="17" y="9" width="1" height="1" fill="#000"/><rect x="2" y="10" width="1" height="1" fill="#000"/><rect x="17" y="10" width="1" height="1" fill="#000"/><rect x="2" y="11" width="1" height="1" fill="#000"/><rect x="17" y="11" width="1" height="1" fill="#000"/><rect x="2" y="12" width="1" height="1" fill="#000"/><rect x="17" y="12" width="1" height="1" fill="#000"/><rect x="2" y="13" width="1" height="1" fill="#000"/><rect x="17" y="13" width="1" height="1" fill="#000"/></svg>
<svg style="left:89px;top:231px;" width="20" height="12" viewBox="0 0 20 12" shape-rendering="crispEdges"><rect x="5" y="0" width="1" height="1" fill="#000"/><rect x="12" y="0" width="1" height="1" fill="#000"/><rect x="4" y="1" width="1" height="1" fill="#000"/><rect x="6" y="1" width="1" height="1" fill="#000"/><rect x="12" y="1" width="1" height="1" fill="#000"/><rect x="4" y="2" width="1" height="1" fill="#000"/><rect x="6" y="2" width="1" height="1" fill="#000"/><rect x="11" y="2" width="1" height="1" fill="#000"/><rect x="4" y="3" width="1" height="1" fill="#000"/><rect x="6" y="3" width="1" height="1" fill="#000"/><rect x="11" y="3" width="1" height="1" fill="#000"/><rect x="3" y="4" width="5" height="1" fill="#000"/><rect x="12" y="4" width="5" height="1" fill="#000"/><rect x="2" y="5" width="1" height="1" fill="#000"/><rect x="7" y="5" width="1" height="1" fill="#000"/><rect x="10" y="5" width="1" height="1" fill="#000"/><rect x="12" y="5" width="1" height="1" fill="#000"/><rect x="17" y="5" width="1" height="1" fill="#000"/><rect x="2" y="6" width="1" height="1" fill="#000"/><rect x="10" y="6" width="1" height="1" fill="#000"/><rect x="12" y="6" width="1" height="1" fill="#000"/><rect x="17" y="6" width="1" height="1" fill="#000"/><rect x="9" y="7" width="1" height="1" fill="#000"/><rect x="12" y="7" width="5" height="1" fill="#000"/><rect x="9" y="8" width="1" height="1" fill="#000"/><rect x="12" y="8" width="1" height="1" fill="#000"/><rect x="17" y="8" width="1" height="1" fill="#000"/><rect x="9" y="9" width="1" height="1" fill="#000"/><rect x="12" y="9" width="1" height="1" fill="#000"/><rect x="17" y="9" width="1" height="1" fill="#000"/><rect x="8" y="10" width="1" height="1" fill="#000"/><rect x="12" y="10" width="1" height="1" fill="#000"/><rect x="17" y="10" width="1" height="1" fill="#000"/><rect x="8" y="11" width="1" height="1" fill="#000"/><rect x="12" y="11" width="5" height="1" fill="#000"/></svg>
<svg style="left:114px;top:230px;" width="20" height="14" viewBox="0 0 20 14" shape-rendering="crispEdges"><rect x="4" y="0" width="6" height="1" fill="#000"/><rect x="3" y="1" width="1" height="1" fill="#000"/><rect x="4" y="1" width="6" height="1" fill="#ffff00"/><rect x="10" y="1" width="7" height="1" fill="#000"/><rect x="3" y="2" width="7" height="1" fill="#000"/><rect x="10" y="2" width="1" height="1" fill="#c8c8a0"/><rect x="11" y="2" width="1" height="1" fill="#ffff00"/><rect x="12" y="2" width="1" height="1" fill="#c8c8a0"/><rect x="13" y="2" width="1" height="1" fill="#ffff00"/><rect x="14" y="2" width="1" height="1" fill="#c8c8a0"/><rect x="15" y="2" width="1" height="1" fill="#ffff00"/><rect x="16" y="2" width="1" height="1" fill="#000"/><rect x="3" y="3" width="1" height="1" fill="#000"/><rect x="4" y="3" width="12" height="1" fill="#ffff00"/><rect x="16" y="3" width="1" height="1" fill="#000"/><rect x="3" y="4" width="1" height="1" fill="#000"/><rect x="4" y="4" width="1" height="1" fill="#c8c8a0"/><rect x="5" y="4" width="1" height="1" fill="#ffff00"/><rect x="6" y="4" width="1" height="1" fill="#c8c8a0"/><rect x="7" y="4" width="1" height="1" fill="#ffff00"/><rect x="8" y="4" width="1" height="1" fill="#c8c8a0"/><rect x="9" y="4" width="1" height="1" fill="#ffff00"/><rect x="10" y="4" width="2" height="1" fill="#000"/><rect x="12" y="4" width="1" height="1" fill="#c8c8a0"/><rect x="13" y="4" width="1" height="1" fill="#ffff00"/><rect x="14" y="4" width="1" height="1" fill="#c8c8a0"/><rect x="15" y="4" width="1" height="1" fill="#ffff00"/><rect x="16" y="4" width="1" height="1" fill="#000"/><rect x="3" y="5" width="1" height="1" fill="#000"/><rect x="4" y="5" width="5" height="1" fill="#ffff00"/><rect x="9" y="5" width="2" height="1" fill="#000"/><rect x="11" y="5" width="5" height="1" fill="#ffff00"/><rect x="16" y="5" width="1" height="1" fill="#000"/><rect x="3" y="6" width="1" height="1" fill="#000"/><rect x="4" y="6" width="1" height="1" fill="#c8c8a0"/><rect x="5" y="6" width="2" height="1" fill="#000"/><rect x="7" y="6" width="1" height="1" fill="#ffff00"/><rect x="8" y="6" width="2" height="1" fill="#000"/><rect x="10" y="6" width="1" height="1" fill="#c8c8a0"/><rect x="11" y="6" width="1" height="1" fill="#ffff00"/><rect x="12" y="6" width="1" height="1" fill="#c8c8a0"/><rect x="13" y="6" width="1" height="1" fill="#ffff00"/><rect x="14" y="6" width="1" height="1" fill="#c8c8a0"/><rect x="15" y="6" width="1" height="1" fill="#ffff00"/><rect x="16" y="6" width="1" height="1" fill="#000"/><rect x="3" y="7" width="1" height="1" fill="#000"/><rect x="4" y="7" width="2" height="1" fill="#ffff00"/><rect x="6" y="7" width="3" height="1" fill="#000"/><rect x="9" y="7" width="7" height="1" fill="#ffff00"/><rect x="16" y="7" width="1" height="1" fill="#000"/><rect x="3" y="8" width="1" height="1" fill="#000"/><rect x="4" y="8" width="1" height="1" fill="#c8c8a0"/><rect x="5" y="8" width="1" height="1" fill="#ffff00"/><rect x="6" y="8" width="1" height="1" fill="#c8c8a0"/><rect x="7" y="8" width="1" height="1" fill="#000"/><rect x="8" y="8" width="1" height="1" fill="#c8c8a0"/><rect x="9" y="8" width="1" height="1" fill="#ffff00"/><rect x="10" y="8" width="1" height="1" fill="#c8c8a0"/><rect x="11" y="8" width="1" height="1" fill="#ffff00"/><rect x="12" y="8" width="1" height="1" fill="#c8c8a0"/><rect x="13" y="8" width="2" height="1" fill="#000"/><rect x="15" y="8" width="1" height="1" fill="#ffff00"/><rect x="16" y="8" width="1" height="1" fill="#000"/><rect x="3" y="9" width="1" height="1" fill="#000"/><rect x="4" y="9" width="8" height="1" fill="#ffff00"/><rect x="12" y="9" width="2" height="1" fill="#000"/><rect x="14" y="9" width="2" height="1" fill="#ffff00"/><rect x="16" y="9" width="1" height="1" fill="#000"/><rect x="3" y="10" width="1" height="1" fill="#000"/><rect x="4" y="10" width="1" height="1" fill="#c8c8a0"/><rect x="5" y="10" width="1" height="1" fill="#ffff00"/><rect x="6" y="10" width="1" height="1" fill="#c8c8a0"/><rect x="7" y="10" width="1" height="1" fill="#ffff00"/><rect x="8" y="10" width="2" height="1" fill="#000"/><rect x="10" y="10" width="1" height="1" fill="#c8c8a0"/><rect x="11" y="10" width="2" height="1" fill="#000"/><rect x="13" y="10" width="1" height="1" fill="#ffff00"/><rect x="14" y="10" width="1" height="1" fill="#c8c8a0"/><rect x="15" y="10" width="1" height="1" fill="#ffff00"/><rect x="16" y="10" width="1" height="1" fill="#000"/><rect x="3" y="11" width="1" height="1" fill="#000"/><rect x="4" y="11" width="5" height="1" fill="#ffff00"/><rect x="9" y="11" width="3" height="1" fill="#000"/><rect x="12" y="11" width="4" height="1" fill="#ffff00"/><rect x="16" y="11" width="1" height="1" fill="#000"/><rect x="3" y="12" width="1" height="1" fill="#000"/><rect x="4" y="12" width="1" height="1" fill="#c8c8a0"/><rect x="5" y="12" width="1" height="1" fill="#ffff00"/><rect x="6" y="12" width="1" height="1" fill="#c8c8a0"/><rect x="7" y="12" width="1" height="1" fill="#ffff00"/><rect x="8" y="12" width="1" height="1" fill="#c8c8a0"/><rect x="9" y="12" width="1" height="1" fill="#ffff00"/><rect x="10" y="12" width="1" height="1" fill="#000"/><rect x="11" y="12" width="1" height="1" fill="#ffff00"/><rect x="12" y="12" width="1" height="1" fill="#c8c8a0"/><rect x="13" y="12" width="1" height="1" fill="#ffff00"/><rect x="14" y="12" width="1" height="1" fill="#c8c8a0"/><rect x="15" y="12" width="1" height="1" fill="#ffff00"/><rect x="16" y="12" width="1" height="1" fill="#000"/><rect x="3" y="13" width="14" height="1" fill="#000"/></svg>
<div style="left:140px;top:228px;width:1px;height:20px;background:#808080;"></div>
<div style="left:141px;top:228px;width:1px;height:20px;background:#ffffff;"></div>
<svg style="left:147px;top:229px;" width="20" height="16" viewBox="0 0 20 16" shape-rendering="crispEdges"><rect x="10" y="0" width="1" height="1" fill="#000"/><rect x="4" y="1" width="1" height="1" fill="#f00"/><rect x="10" y="1" width="1" height="1" fill="#000"/><rect x="3" y="2" width="1" height="1" fill="#f00"/><rect x="5" y="2" width="1" height="1" fill="#f00"/><rect x="10" y="2" width="1" height="1" fill="#000"/><rect x="2" y="3" width="1" height="1" fill="#f00"/><rect x="6" y="3" width="1" height="1" fill="#f00"/><rect x="10" y="3" width="1" height="1" fill="#000"/><rect x="6" y="4" width="1" height="1" fill="#f00"/><rect x="10" y="4" width="1" height="1" fill="#000"/><rect x="7" y="5" width="1" height="1" fill="#f00"/><rect x="10" y="5" width="1" height="1" fill="#000"/><rect x="7" y="6" width="1" height="1" fill="#f00"/><rect x="10" y="6" width="1" height="1" fill="#000"/><rect x="2" y="7" width="6" height="1" fill="#000"/><rect x="8" y="7" width="1" height="1" fill="#f00"/><rect x="9" y="7" width="9" height="1" fill="#000"/><rect x="8" y="8" width="1" height="1" fill="#f00"/><rect x="10" y="8" width="1" height="1" fill="#000"/><rect x="17" y="8" width="1" height="1" fill="#f00"/><rect x="9" y="9" width="1" height="1" fill="#f00"/><rect x="10" y="9" width="1" height="1" fill="#000"/><rect x="16" y="9" width="1" height="1" fill="#f00"/><rect x="10" y="10" width="1" height="1" fill="#000"/><rect x="11" y="10" width="1" height="1" fill="#f00"/><rect x="15" y="10" width="1" height="1" fill="#f00"/><rect x="10" y="11" width="1" height="1" fill="#000"/><rect x="12" y="11" width="1" height="1" fill="#f00"/><rect x="14" y="11" width="1" height="1" fill="#f00"/><rect x="10" y="12" width="1" height="1" fill="#000"/><rect x="13" y="12" width="1" height="1" fill="#f00"/><rect x="10" y="13" width="1" height="1" fill="#000"/><rect x="10" y="14" width="1" height="1" fill="#000"/><rect x="10" y="15" width="1" height="1" fill="#000"/></svg>
<svg style="left:172px;top:229px;" width="20" height="16" viewBox="0 0 20 16" shape-rendering="crispEdges"><rect x="9" y="0" width="2" height="1" fill="#000"/><rect x="7" y="1" width="1" height="1" fill="#000"/><rect x="9" y="1" width="2" height="1" fill="#000"/><rect x="12" y="1" width="1" height="1" fill="#000"/><rect x="8" y="2" width="1" height="1" fill="#000"/><rect x="11" y="2" width="1" height="1" fill="#000"/><rect x="9" y="3" width="2" height="1" fill="#000"/><rect x="5" y="7" width="2" height="1" fill="#000"/><rect x="8" y="7" width="2" height="1" fill="#000"/><rect x="11" y="7" width="2" height="1" fill="#000"/><rect x="14" y="7" width="1" height="1" fill="#000"/><rect x="4" y="8" width="10" height="1" fill="#000"/><rect x="15" y="8" width="1" height="1" fill="#000"/><rect x="3" y="9" width="2" height="1" fill="#000"/><rect x="15" y="9" width="2" height="1" fill="#000"/><rect x="3" y="10" width="1" height="1" fill="#000"/><rect x="16" y="10" width="1" height="1" fill="#000"/><rect x="2" y="11" width="1" height="1" fill="#000"/><rect x="17" y="11" width="1" height="1" fill="#000"/><rect x="9" y="12" width="2" height="1" fill="#000"/><rect x="8" y="13" width="1" height="1" fill="#000"/><rect x="11" y="13" width="1" height="1" fill="#000"/><rect x="7" y="14" width="1" height="1" fill="#000"/><rect x="9" y="14" width="2" height="1" fill="#000"/><rect x="12" y="14" width="1" height="1" fill="#000"/><rect x="9" y="15" width="2" height="1" fill="#000"/></svg>
<div style="left:195px;top:227px;width:86px;height:21px;background:#fff;box-shadow:inset 1px 1px 0 #808080,inset -1px -1px 0 #ffffff,inset 2px 2px 0 #404040,inset -2px -2px 0 #d4d0c8"></div>
<div style="left:263px;top:229px;width:16px;height:17px;background:#d4d0c8;box-shadow:inset 1px 1px 0 #d4d0c8,inset -1px -1px 0 #404040,inset 2px 2px 0 #ffffff,inset -2px -2px 0 #808080"></div>
<svg style="left:267px;top:235px;" width="9" height="6" viewBox="0 0 9 6" shape-rendering="crispEdges"><path d="M0 0h7v1h-1v1h-1v1h-1v1h-1v-1h-1v-1h-1v-1h-1z" fill="#000"/></svg>
<div style="left:199px;top:231.84px;font-size:12px;line-height:12px;color:#000;font-weight:normal;white-space:nowrap;transform:scaleX(.885);transform-origin:0 50%">Rectangular</div>
<div style="left:281px;top:227px;width:66px;height:21px;background:#fff;box-shadow:inset 1px 1px 0 #808080,inset -1px -1px 0 #ffffff,inset 2px 2px 0 #404040,inset -2px -2px 0 #d4d0c8"></div>
<div style="left:329px;top:229px;width:16px;height:17px;background:#d4d0c8;box-shadow:inset 1px 1px 0 #d4d0c8,inset -1px -1px 0 #404040,inset 2px 2px 0 #ffffff,inset -2px -2px 0 #808080"></div>
<svg style="left:333px;top:235px;" width="9" height="6" viewBox="0 0 9 6" shape-rendering="crispEdges"><path d="M0 0h7v1h-1v1h-1v1h-1v1h-1v-1h-1v-1h-1v-1h-1z" fill="#000"/></svg>
<div style="left:285px;top:231.84px;font-size:12px;line-height:12px;color:#000;font-weight:normal;white-space:nowrap;transform:scaleX(.885);transform-origin:0 50%">CH A</div>
<div style="left:347px;top:227px;width:60px;height:21px;background:#fff;box-shadow:inset 1px 1px 0 #808080,inset -1px -1px 0 #ffffff,inset 2px 2px 0 #404040,inset -2px -2px 0 #d4d0c8"></div>
<div style="left:389px;top:229px;width:16px;height:17px;background:#d4d0c8;box-shadow:inset 1px 1px 0 #d4d0c8,inset -1px -1px 0 #404040,inset 2px 2px 0 #ffffff,inset -2px -2px 0 #808080"></div>
<svg style="left:393px;top:235px;" width="9" height="6" viewBox="0 0 9 6" shape-rendering="crispEdges"><path d="M0 0h7v1h-1v1h-1v1h-1v1h-1v-1h-1v-1h-1v-1h-1z" fill="#000"/></svg>
<div style="left:351px;top:231.84px;font-size:12px;line-height:12px;color:#000;font-weight:normal;white-space:nowrap;transform:scaleX(.885);transform-origin:0 50%">dBV</div>
<div style="left:407px;top:227px;width:86px;height:21px;background:#fff;box-shadow:inset 1px 1px 0 #808080,inset -1px -1px 0 #ffffff,inset 2px 2px 0 #404040,inset -2px -2px 0 #d4d0c8"></div>
<div style="left:475px;top:229px;width:16px;height:17px;background:#d4d0c8;box-shadow:inset 1px 1px 0 #d4d0c8,inset -1px -1px 0 #404040,inset 2px 2px 0 #ffffff,inset -2px -2px 0 #808080"></div>
<svg style="left:479px;top:235px;" width="9" height="6" viewBox="0 0 9 6" shape-rendering="crispEdges"><path d="M0 0h7v1h-1v1h-1v1h-1v1h-1v-1h-1v-1h-1v-1h-1z" fill="#000"/></svg>
<div style="left:411px;top:231.84px;font-size:12px;line-height:12px;color:#000;font-weight:normal;white-space:nowrap;transform:scaleX(.885);transform-origin:0 50%">Unsmoothed</div>
<div style="left:493px;top:227px;width:48px;height:21px;background:#fff;box-shadow:inset 1px 1px 0 #808080,inset -1px -1px 0 #ffffff,inset 2px 2px 0 #404040,inset -2px -2px 0 #d4d0c8"></div>
<div style="left:523px;top:229px;width:16px;height:17px;background:#d4d0c8;box-shadow:inset 1px 1px 0 #d4d0c8,inset -1px -1px 0 #404040,inset 2px 2px 0 #ffffff,inset -2px -2px 0 #808080"></div>
<svg style="left:527px;top:235px;" width="9" height="6" viewBox="0 0 9 6" shape-rendering="crispEdges"><path d="M0 0h7v1h-1v1h-1v1h-1v1h-1v-1h-1v-1h-1v-1h-1z" fill="#000"/></svg>
<div style="left:496px;top:230px;width:6px;height:13px;background:#0a246a;"></div>
<svg style="left:497px;top:232px;" width="3" height="10" viewBox="0 0 3 10" shape-rendering="crispEdges"><rect x="2" y="0" width="1" height="1" fill="#fff"/><rect x="0" y="1" width="3" height="1" fill="#fff"/><rect x="2" y="2" width="1" height="1" fill="#fff"/><rect x="2" y="3" width="1" height="1" fill="#fff"/><rect x="2" y="4" width="1" height="1" fill="#fff"/><rect x="2" y="5" width="1" height="1" fill="#fff"/><rect x="2" y="6" width="1" height="1" fill="#fff"/><rect x="2" y="7" width="1" height="1" fill="#fff"/><rect x="2" y="8" width="1" height="1" fill="#fff"/><rect x="2" y="9" width="1" height="1" fill="#fff"/></svg>
<div style="left:541px;top:226px;width:40px;height:23px;box-shadow:inset 1px 1px 0 #808080,inset -1px -1px 0 #ffffff"></div>
<svg style="left:557px;top:230px;" width="5" height="12" viewBox="0 0 5 12" shape-rendering="crispEdges"><rect x="3" y="0" width="2" height="1" fill="#000"/><rect x="2" y="1" width="3" height="1" fill="#000"/><rect x="1" y="2" width="4" height="1" fill="#000"/><rect x="0" y="3" width="2" height="1" fill="#000"/><rect x="3" y="3" width="2" height="1" fill="#000"/><rect x="3" y="4" width="2" height="1" fill="#000"/><rect x="3" y="5" width="2" height="1" fill="#000"/><rect x="3" y="6" width="2" height="1" fill="#000"/><rect x="3" y="7" width="2" height="1" fill="#000"/><rect x="3" y="8" width="2" height="1" fill="#000"/><rect x="3" y="9" width="2" height="1" fill="#000"/><rect x="3" y="10" width="2" height="1" fill="#000"/><rect x="3" y="11" width="2" height="1" fill="#000"/></svg>
<div style="left:10px;top:256px;width:810px;height:385px;background:#000;box-shadow:inset 1px 1px 0 #808080,inset -1px -1px 0 #ffffff,inset -2px -2px 0 #ffffff"></div>
<svg style="left:67px;top:268px;" width="10" height="5" viewBox="0 0 10 5" shape-rendering="crispEdges"><rect x="4" y="0" width="2" height="1" fill="#fff"/><rect x="3" y="1" width="4" height="1" fill="#fff"/><rect x="2" y="2" width="6" height="1" fill="#fff"/><rect x="1" y="3" width="8" height="1" fill="#fff"/><rect x="0" y="4" width="10" height="1" fill="#fff"/></svg>
<svg style="left:91px;top:268px;" width="10" height="5" viewBox="0 0 10 5" shape-rendering="crispEdges"><rect x="0" y="0" width="10" height="1" fill="#fff"/><rect x="1" y="1" width="8" height="1" fill="#fff"/><rect x="2" y="2" width="6" height="1" fill="#fff"/><rect x="3" y="3" width="4" height="1" fill="#fff"/><rect x="4" y="4" width="2" height="1" fill="#fff"/></svg>
<svg style="left:115px;top:265px;" width="10" height="5" viewBox="0 0 10 5" shape-rendering="crispEdges"><rect x="4" y="0" width="2" height="1" fill="#fff"/><rect x="3" y="1" width="4" height="1" fill="#fff"/><rect x="2" y="2" width="6" height="1" fill="#fff"/><rect x="1" y="3" width="8" height="1" fill="#fff"/><rect x="0" y="4" width="10" height="1" fill="#fff"/></svg>
<svg style="left:115px;top:272px;" width="10" height="5" viewBox="0 0 10 5" shape-rendering="crispEdges"><rect x="0" y="0" width="10" height="1" fill="#fff"/><rect x="1" y="1" width="8" height="1" fill="#fff"/><rect x="2" y="2" width="6" height="1" fill="#fff"/><rect x="3" y="3" width="4" height="1" fill="#fff"/><rect x="4" y="4" width="2" height="1" fill="#fff"/></svg>
<svg style="left:139px;top:265px;" width="10" height="5" viewBox="0 0 10 5" shape-rendering="crispEdges"><rect x="0" y="0" width="10" height="1" fill="#fff"/><rect x="1" y="1" width="8" height="1" fill="#fff"/><rect x="2" y="2" width="6" height="1" fill="#fff"/><rect x="3" y="3" width="4" height="1" fill="#fff"/><rect x="4" y="4" width="2" height="1" fill="#fff"/></svg>
<svg style="left:139px;top:272px;" width="10" height="5" viewBox="0 0 10 5" shape-rendering="crispEdges"><rect x="4" y="0" width="2" height="1" fill="#fff"/><rect x="3" y="1" width="4" height="1" fill="#fff"/><rect x="2" y="2" width="6" height="1" fill="#fff"/><rect x="1" y="3" width="8" height="1" fill="#fff"/><rect x="0" y="4" width="10" height="1" fill="#fff"/></svg>
<svg style="left:182px;top:263px;" width="20" height="17" viewBox="0 0 20 17" shape-rendering="crispEdges"><rect x="5" y="0" width="5" height="1" fill="#ffffff"/><rect x="3" y="1" width="2" height="1" fill="#ffffff"/><rect x="5" y="1" width="5" height="1" fill="#a0a0a0"/><rect x="10" y="1" width="2" height="1" fill="#ffffff"/><rect x="2" y="2" width="1" height="1" fill="#ffffff"/><rect x="3" y="2" width="2" height="1" fill="#a0a0a0"/><rect x="5" y="2" width="1" height="1" fill="#ffffff"/><rect x="6" y="2" width="1" height="1" fill="#d0e8e8"/><rect x="7" y="2" width="1" height="1" fill="#ffffff"/><rect x="8" y="2" width="1" height="1" fill="#d0e8e8"/><rect x="9" y="2" width="1" height="1" fill="#ffffff"/><rect x="10" y="2" width="2" height="1" fill="#a0a0a0"/><rect x="12" y="2" width="1" height="1" fill="#ffffff"/><rect x="2" y="3" width="1" height="1" fill="#ffffff"/><rect x="3" y="3" width="1" height="1" fill="#a0a0a0"/><rect x="4" y="3" width="1" height="1" fill="#ffffff"/><rect x="5" y="3" width="1" height="1" fill="#d0e8e8"/><rect x="6" y="3" width="1" height="1" fill="#ffffff"/><rect x="7" y="3" width="1" height="1" fill="#ff0000"/><rect x="8" y="3" width="1" height="1" fill="#ffffff"/><rect x="9" y="3" width="1" height="1" fill="#d0e8e8"/><rect x="10" y="3" width="1" height="1" fill="#ffffff"/><rect x="11" y="3" width="1" height="1" fill="#a0a0a0"/><rect x="12" y="3" width="1" height="1" fill="#ffffff"/><rect x="2" y="4" width="1" height="1" fill="#ffffff"/><rect x="3" y="4" width="1" height="1" fill="#a0a0a0"/><rect x="4" y="4" width="1" height="1" fill="#d0e8e8"/><rect x="5" y="4" width="1" height="1" fill="#ffffff"/><rect x="6" y="4" width="1" height="1" fill="#d0e8e8"/><rect x="7" y="4" width="1" height="1" fill="#ff0000"/><rect x="8" y="4" width="1" height="1" fill="#d0e8e8"/><rect x="9" y="4" width="1" height="1" fill="#ffffff"/><rect x="10" y="4" width="1" height="1" fill="#d0e8e8"/><rect x="11" y="4" width="1" height="1" fill="#a0a0a0"/><rect x="12" y="4" width="1" height="1" fill="#ffffff"/><rect x="2" y="5" width="1" height="1" fill="#ffffff"/><rect x="3" y="5" width="1" height="1" fill="#a0a0a0"/><rect x="4" y="5" width="1" height="1" fill="#ffffff"/><rect x="5" y="5" width="5" height="1" fill="#ff0000"/><rect x="10" y="5" width="1" height="1" fill="#ffffff"/><rect x="11" y="5" width="1" height="1" fill="#a0a0a0"/><rect x="12" y="5" width="1" height="1" fill="#ffffff"/><rect x="2" y="6" width="1" height="1" fill="#ffffff"/><rect x="3" y="6" width="1" height="1" fill="#a0a0a0"/><rect x="4" y="6" width="1" height="1" fill="#d0e8e8"/><rect x="5" y="6" width="1" height="1" fill="#ffffff"/><rect x="6" y="6" width="1" height="1" fill="#d0e8e8"/><rect x="7" y="6" width="1" height="1" fill="#ff0000"/><rect x="8" y="6" width="1" height="1" fill="#d0e8e8"/><rect x="9" y="6" width="1" height="1" fill="#ffffff"/><rect x="10" y="6" width="1" height="1" fill="#d0e8e8"/><rect x="11" y="6" width="1" height="1" fill="#a0a0a0"/><rect x="12" y="6" width="1" height="1" fill="#ffffff"/><rect x="2" y="7" width="1" height="1" fill="#ffffff"/><rect x="3" y="7" width="1" height="1" fill="#a0a0a0"/><rect x="4" y="7" width="1" height="1" fill="#ffffff"/><rect x="5" y="7" width="1" height="1" fill="#d0e8e8"/><rect x="6" y="7" width="1" height="1" fill="#ffffff"/><rect x="7" y="7" width="1" height="1" fill="#ff0000"/><rect x="8" y="7" width="1" height="1" fill="#ffffff"/><rect x="9" y="7" width="1" height="1" fill="#d0e8e8"/><rect x="10" y="7" width="1" height="1" fill="#ffffff"/><rect x="11" y="7" width="1" height="1" fill="#a0a0a0"/><rect x="12" y="7" width="1" height="1" fill="#ffffff"/><rect x="2" y="8" width="1" height="1" fill="#ffffff"/><rect x="3" y="8" width="2" height="1" fill="#a0a0a0"/><rect x="5" y="8" width="1" height="1" fill="#ffffff"/><rect x="6" y="8" width="1" height="1" fill="#d0e8e8"/><rect x="7" y="8" width="1" height="1" fill="#ffffff"/><rect x="8" y="8" width="1" height="1" fill="#d0e8e8"/><rect x="9" y="8" width="1" height="1" fill="#ffffff"/><rect x="10" y="8" width="2" height="1" fill="#a0a0a0"/><rect x="12" y="8" width="1" height="1" fill="#ffffff"/><rect x="3" y="9" width="2" height="1" fill="#ffffff"/><rect x="5" y="9" width="5" height="1" fill="#a0a0a0"/><rect x="10" y="9" width="2" height="1" fill="#ffffff"/><rect x="12" y="9" width="1" height="1" fill="#ffff00"/><rect x="5" y="10" width="5" height="1" fill="#ffffff"/><rect x="10" y="10" width="2" height="1" fill="#ffff00"/><rect x="12" y="10" width="1" height="1" fill="#ffffff"/><rect x="11" y="11" width="1" height="1" fill="#ffffff"/><rect x="12" y="11" width="1" height="1" fill="#a0a0a0"/><rect x="13" y="11" width="1" height="1" fill="#ffffff"/><rect x="12" y="12" width="1" height="1" fill="#ffffff"/><rect x="13" y="12" width="1" height="1" fill="#a0a0a0"/><rect x="14" y="12" width="1" height="1" fill="#ffffff"/><rect x="13" y="13" width="1" height="1" fill="#ffffff"/><rect x="14" y="13" width="1" height="1" fill="#a0a0a0"/><rect x="15" y="13" width="1" height="1" fill="#ffffff"/><rect x="14" y="14" width="1" height="1" fill="#ffffff"/><rect x="15" y="14" width="1" height="1" fill="#a0a0a0"/><rect x="16" y="14" width="1" height="1" fill="#ffffff"/><rect x="15" y="15" width="1" height="1" fill="#ffffff"/><rect x="16" y="15" width="1" height="1" fill="#a0a0a0"/><rect x="17" y="15" width="1" height="1" fill="#ffffff"/><rect x="16" y="16" width="2" height="1" fill="#ffffff"/></svg>
<svg style="left:206px;top:263px;" width="20" height="17" viewBox="0 0 20 17" shape-rendering="crispEdges"><rect x="5" y="0" width="5" height="1" fill="#ffffff"/><rect x="3" y="1" width="2" height="1" fill="#ffffff"/><rect x="5" y="1" width="5" height="1" fill="#a0a0a0"/><rect x="10" y="1" width="2" height="1" fill="#ffffff"/><rect x="2" y="2" width="1" height="1" fill="#ffffff"/><rect x="3" y="2" width="2" height="1" fill="#a0a0a0"/><rect x="5" y="2" width="1" height="1" fill="#ffffff"/><rect x="6" y="2" width="1" height="1" fill="#d0e8e8"/><rect x="7" y="2" width="1" height="1" fill="#ffffff"/><rect x="8" y="2" width="1" height="1" fill="#d0e8e8"/><rect x="9" y="2" width="1" height="1" fill="#ffffff"/><rect x="10" y="2" width="2" height="1" fill="#a0a0a0"/><rect x="12" y="2" width="1" height="1" fill="#ffffff"/><rect x="2" y="3" width="1" height="1" fill="#ffffff"/><rect x="3" y="3" width="1" height="1" fill="#a0a0a0"/><rect x="4" y="3" width="1" height="1" fill="#ffffff"/><rect x="5" y="3" width="1" height="1" fill="#d0e8e8"/><rect x="6" y="3" width="3" height="1" fill="#ffffff"/><rect x="9" y="3" width="1" height="1" fill="#d0e8e8"/><rect x="10" y="3" width="1" height="1" fill="#ffffff"/><rect x="11" y="3" width="1" height="1" fill="#a0a0a0"/><rect x="12" y="3" width="1" height="1" fill="#ffffff"/><rect x="2" y="4" width="1" height="1" fill="#ffffff"/><rect x="3" y="4" width="1" height="1" fill="#a0a0a0"/><rect x="4" y="4" width="1" height="1" fill="#d0e8e8"/><rect x="5" y="4" width="1" height="1" fill="#ffffff"/><rect x="6" y="4" width="1" height="1" fill="#d0e8e8"/><rect x="7" y="4" width="1" height="1" fill="#ffffff"/><rect x="8" y="4" width="1" height="1" fill="#d0e8e8"/><rect x="9" y="4" width="1" height="1" fill="#ffffff"/><rect x="10" y="4" width="1" height="1" fill="#d0e8e8"/><rect x="11" y="4" width="1" height="1" fill="#a0a0a0"/><rect x="12" y="4" width="1" height="1" fill="#ffffff"/><rect x="2" y="5" width="1" height="1" fill="#ffffff"/><rect x="3" y="5" width="1" height="1" fill="#a0a0a0"/><rect x="4" y="5" width="1" height="1" fill="#ffffff"/><rect x="5" y="5" width="5" height="1" fill="#ff0000"/><rect x="10" y="5" width="1" height="1" fill="#ffffff"/><rect x="11" y="5" width="1" height="1" fill="#a0a0a0"/><rect x="12" y="5" width="1" height="1" fill="#ffffff"/><rect x="2" y="6" width="1" height="1" fill="#ffffff"/><rect x="3" y="6" width="1" height="1" fill="#a0a0a0"/><rect x="4" y="6" width="1" height="1" fill="#d0e8e8"/><rect x="5" y="6" width="1" height="1" fill="#ffffff"/><rect x="6" y="6" width="1" height="1" fill="#d0e8e8"/><rect x="7" y="6" width="1" height="1" fill="#ffffff"/><rect x="8" y="6" width="1" height="1" fill="#d0e8e8"/><rect x="9" y="6" width="1" height="1" fill="#ffffff"/><rect x="10" y="6" width="1" height="1" fill="#d0e8e8"/><rect x="11" y="6" width="1" height="1" fill="#a0a0a0"/><rect x="12" y="6" width="1" height="1" fill="#ffffff"/><rect x="2" y="7" width="1" height="1" fill="#ffffff"/><rect x="3" y="7" width="1" height="1" fill="#a0a0a0"/><rect x="4" y="7" width="1" height="1" fill="#ffffff"/><rect x="5" y="7" width="1" height="1" fill="#d0e8e8"/><rect x="6" y="7" width="3" height="1" fill="#ffffff"/><rect x="9" y="7" width="1" height="1" fill="#d0e8e8"/><rect x="10" y="7" width="1" height="1" fill="#ffffff"/><rect x="11" y="7" width="1" height="1" fill="#a0a0a0"/><rect x="12" y="7" width="1" height="1" fill="#ffffff"/><rect x="2" y="8" width="1" height="1" fill="#ffffff"/><rect x="3" y="8" width="2" height="1" fill="#a0a0a0"/><rect x="5" y="8" width="1" height="1" fill="#ffffff"/><rect x="6" y="8" width="1" height="1" fill="#d0e8e8"/><rect x="7" y="8" width="1" height="1" fill="#ffffff"/><rect x="8" y="8" width="1" height="1" fill="#d0e8e8"/><rect x="9" y="8" width="1" height="1" fill="#ffffff"/><rect x="10" y="8" width="2" height="1" fill="#a0a0a0"/><rect x="12" y="8" width="1" height="1" fill="#ffffff"/><rect x="3" y="9" width="2" height="1" fill="#ffffff"/><rect x="5" y="9" width="5" height="1" fill="#a0a0a0"/><rect x="10" y="9" width="2" height="1" fill="#ffffff"/><rect x="12" y="9" width="1" height="1" fill="#ffff00"/><rect x="5" y="10" width="5" height="1" fill="#ffffff"/><rect x="10" y="10" width="2" height="1" fill="#ffff00"/><rect x="12" y="10" width="1" height="1" fill="#ffffff"/><rect x="11" y="11" width="1" height="1" fill="#ffffff"/><rect x="12" y="11" width="1" height="1" fill="#a0a0a0"/><rect x="13" y="11" width="1" height="1" fill="#ffffff"/><rect x="12" y="12" width="1" height="1" fill="#ffffff"/><rect x="13" y="12" width="1" height="1" fill="#a0a0a0"/><rect x="14" y="12" width="1" height="1" fill="#ffffff"/><rect x="13" y="13" width="1" height="1" fill="#ffffff"/><rect x="14" y="13" width="1" height="1" fill="#a0a0a0"/><rect x="15" y="13" width="1" height="1" fill="#ffffff"/><rect x="14" y="14" width="1" height="1" fill="#ffffff"/><rect x="15" y="14" width="1" height="1" fill="#a0a0a0"/><rect x="16" y="14" width="1" height="1" fill="#ffffff"/><rect x="15" y="15" width="1" height="1" fill="#ffffff"/><rect x="16" y="15" width="1" height="1" fill="#a0a0a0"/><rect x="17" y="15" width="1" height="1" fill="#ffffff"/><rect x="16" y="16" width="2" height="1" fill="#ffffff"/></svg>
<div style="left:252px;top:264px;width:16px;height:16px;background:#ffffc8"></div>
<div style="left:252px;top:265px;width:12px;height:12px;background:#fff;box-shadow:inset 1px 1px 0 #808080,inset -1px -1px 0 #ffffff,inset 2px 2px 0 #404040,inset -2px -2px 0 #d4d0c8"></div>
<svg style="left:255px;top:268px;" width="7" height="7" viewBox="0 0 7 7" shape-rendering="crispEdges"><rect x="6" y="0" width="1" height="1" fill="#000"/><rect x="5" y="1" width="2" height="1" fill="#000"/><rect x="0" y="2" width="1" height="1" fill="#000"/><rect x="4" y="2" width="3" height="1" fill="#000"/><rect x="0" y="3" width="2" height="1" fill="#000"/><rect x="3" y="3" width="3" height="1" fill="#000"/><rect x="0" y="4" width="5" height="1" fill="#000"/><rect x="1" y="5" width="3" height="1" fill="#000"/><rect x="2" y="6" width="1" height="1" fill="#000"/></svg>
<div style="left:289px;top:264px;width:14px;height:14px;border:1px solid #fff"></div>
<svg style="left:294px;top:266px;" width="4" height="10" viewBox="0 0 4 10" shape-rendering="crispEdges"><rect x="2" y="0" width="2" height="1" fill="#fff"/><rect x="0" y="1" width="4" height="1" fill="#fff"/><rect x="2" y="2" width="2" height="1" fill="#fff"/><rect x="2" y="3" width="2" height="1" fill="#fff"/><rect x="2" y="4" width="2" height="1" fill="#fff"/><rect x="2" y="5" width="2" height="1" fill="#fff"/><rect x="2" y="6" width="2" height="1" fill="#fff"/><rect x="2" y="7" width="2" height="1" fill="#fff"/><rect x="2" y="8" width="2" height="1" fill="#fff"/><rect x="2" y="9" width="2" height="1" fill="#fff"/></svg>
<div style="left:310px;top:264px;width:16px;height:16px;background:#ff0000"></div>
<div style="left:310px;top:265px;width:13px;height:13px;background:#fff;box-shadow:inset 1px 1px 0 #808080,inset -1px -1px 0 #ffffff,inset 2px 2px 0 #404040,inset -2px -2px 0 #d4d0c8"></div>
<div style="left:335px;top:264px;width:14px;height:14px;border:1px solid #fff"></div>
<svg style="left:339px;top:266px;" width="6" height="10" viewBox="0 0 6 10" shape-rendering="crispEdges"><rect x="1" y="0" width="4" height="1" fill="#fff"/><rect x="0" y="1" width="2" height="1" fill="#fff"/><rect x="4" y="1" width="2" height="1" fill="#fff"/><rect x="4" y="2" width="2" height="1" fill="#fff"/><rect x="4" y="3" width="2" height="1" fill="#fff"/><rect x="3" y="4" width="2" height="1" fill="#fff"/><rect x="2" y="5" width="2" height="1" fill="#fff"/><rect x="1" y="6" width="2" height="1" fill="#fff"/><rect x="0" y="7" width="2" height="1" fill="#fff"/><rect x="0" y="8" width="2" height="1" fill="#fff"/><rect x="0" y="9" width="6" height="1" fill="#fff"/></svg>
<div style="left:356px;top:264px;width:16px;height:16px;background:#ffffff"></div>
<div style="left:356px;top:265px;width:13px;height:13px;background:#fff;box-shadow:inset 1px 1px 0 #808080,inset -1px -1px 0 #ffffff,inset 2px 2px 0 #404040,inset -2px -2px 0 #d4d0c8"></div>
<div style="left:381px;top:264px;width:14px;height:14px;border:1px solid #fff"></div>
<svg style="left:385px;top:266px;" width="6" height="10" viewBox="0 0 6 10" shape-rendering="crispEdges"><rect x="1" y="0" width="4" height="1" fill="#fff"/><rect x="0" y="1" width="2" height="1" fill="#fff"/><rect x="4" y="1" width="2" height="1" fill="#fff"/><rect x="4" y="2" width="2" height="1" fill="#fff"/><rect x="4" y="3" width="2" height="1" fill="#fff"/><rect x="2" y="4" width="3" height="1" fill="#fff"/><rect x="4" y="5" width="2" height="1" fill="#fff"/><rect x="4" y="6" width="2" height="1" fill="#fff"/><rect x="4" y="7" width="2" height="1" fill="#fff"/><rect x="0" y="8" width="2" height="1" fill="#fff"/><rect x="4" y="8" width="2" height="1" fill="#fff"/><rect x="1" y="9" width="4" height="1" fill="#fff"/></svg>
<div style="left:402px;top:264px;width:16px;height:16px;background:#00ff00"></div>
<div style="left:402px;top:265px;width:13px;height:13px;background:#fff;box-shadow:inset 1px 1px 0 #808080,inset -1px -1px 0 #ffffff,inset 2px 2px 0 #404040,inset -2px -2px 0 #d4d0c8"></div>
<div style="left:427px;top:264px;width:14px;height:14px;border:1px solid #fff"></div>
<svg style="left:431px;top:266px;" width="6" height="10" viewBox="0 0 6 10" shape-rendering="crispEdges"><rect x="3" y="0" width="2" height="1" fill="#fff"/><rect x="2" y="1" width="3" height="1" fill="#fff"/><rect x="1" y="2" width="4" height="1" fill="#fff"/><rect x="0" y="3" width="2" height="1" fill="#fff"/><rect x="3" y="3" width="2" height="1" fill="#fff"/><rect x="0" y="4" width="2" height="1" fill="#fff"/><rect x="3" y="4" width="2" height="1" fill="#fff"/><rect x="0" y="5" width="2" height="1" fill="#fff"/><rect x="3" y="5" width="2" height="1" fill="#fff"/><rect x="0" y="6" width="6" height="1" fill="#fff"/><rect x="3" y="7" width="2" height="1" fill="#fff"/><rect x="3" y="8" width="2" height="1" fill="#fff"/><rect x="3" y="9" width="2" height="1" fill="#fff"/></svg>
<div style="left:448px;top:264px;width:16px;height:16px;background:#ffff00"></div>
<div style="left:448px;top:265px;width:13px;height:13px;background:#fff;box-shadow:inset 1px 1px 0 #808080,inset -1px -1px 0 #ffffff,inset 2px 2px 0 #404040,inset -2px -2px 0 #d4d0c8"></div>
<div style="left:473px;top:264px;width:14px;height:14px;border:1px solid #fff"></div>
<svg style="left:477px;top:266px;" width="6" height="10" viewBox="0 0 6 10" shape-rendering="crispEdges"><rect x="0" y="0" width="6" height="1" fill="#fff"/><rect x="0" y="1" width="2" height="1" fill="#fff"/><rect x="0" y="2" width="2" height="1" fill="#fff"/><rect x="0" y="3" width="5" height="1" fill="#fff"/><rect x="4" y="4" width="2" height="1" fill="#fff"/><rect x="4" y="5" width="2" height="1" fill="#fff"/><rect x="4" y="6" width="2" height="1" fill="#fff"/><rect x="4" y="7" width="2" height="1" fill="#fff"/><rect x="0" y="8" width="2" height="1" fill="#fff"/><rect x="4" y="8" width="2" height="1" fill="#fff"/><rect x="1" y="9" width="4" height="1" fill="#fff"/></svg>
<div style="left:494px;top:264px;width:16px;height:16px;background:#ff8000"></div>
<div style="left:494px;top:265px;width:13px;height:13px;background:#fff;box-shadow:inset 1px 1px 0 #808080,inset -1px -1px 0 #ffffff,inset 2px 2px 0 #404040,inset -2px -2px 0 #d4d0c8"></div>
<div style="left:519px;top:264px;width:14px;height:14px;border:1px solid #fff"></div>
<svg style="left:523px;top:266px;" width="6" height="10" viewBox="0 0 6 10" shape-rendering="crispEdges"><rect x="1" y="0" width="4" height="1" fill="#fff"/><rect x="0" y="1" width="2" height="1" fill="#fff"/><rect x="4" y="1" width="2" height="1" fill="#fff"/><rect x="0" y="2" width="2" height="1" fill="#fff"/><rect x="0" y="3" width="2" height="1" fill="#fff"/><rect x="0" y="4" width="5" height="1" fill="#fff"/><rect x="0" y="5" width="2" height="1" fill="#fff"/><rect x="4" y="5" width="2" height="1" fill="#fff"/><rect x="0" y="6" width="2" height="1" fill="#fff"/><rect x="4" y="6" width="2" height="1" fill="#fff"/><rect x="0" y="7" width="2" height="1" fill="#fff"/><rect x="4" y="7" width="2" height="1" fill="#fff"/><rect x="0" y="8" width="2" height="1" fill="#fff"/><rect x="4" y="8" width="2" height="1" fill="#fff"/><rect x="1" y="9" width="4" height="1" fill="#fff"/></svg>
<div style="left:540px;top:264px;width:16px;height:16px;background:#0000ff"></div>
<div style="left:540px;top:265px;width:13px;height:13px;background:#fff;box-shadow:inset 1px 1px 0 #808080,inset -1px -1px 0 #ffffff,inset 2px 2px 0 #404040,inset -2px -2px 0 #d4d0c8"></div>
<div style="left:565px;top:264px;width:14px;height:14px;border:1px solid #fff"></div>
<svg style="left:569px;top:266px;" width="6" height="10" viewBox="0 0 6 10" shape-rendering="crispEdges"><rect x="0" y="0" width="6" height="1" fill="#fff"/><rect x="4" y="1" width="2" height="1" fill="#fff"/><rect x="4" y="2" width="2" height="1" fill="#fff"/><rect x="3" y="3" width="2" height="1" fill="#fff"/><rect x="3" y="4" width="2" height="1" fill="#fff"/><rect x="2" y="5" width="2" height="1" fill="#fff"/><rect x="2" y="6" width="2" height="1" fill="#fff"/><rect x="1" y="7" width="2" height="1" fill="#fff"/><rect x="1" y="8" width="2" height="1" fill="#fff"/><rect x="1" y="9" width="2" height="1" fill="#fff"/></svg>
<div style="left:586px;top:264px;width:16px;height:16px;background:#ff00ff"></div>
<div style="left:586px;top:265px;width:13px;height:13px;background:#fff;box-shadow:inset 1px 1px 0 #808080,inset -1px -1px 0 #ffffff,inset 2px 2px 0 #404040,inset -2px -2px 0 #d4d0c8"></div>
<div style="left:611px;top:264px;width:14px;height:14px;border:1px solid #fff"></div>
<svg style="left:615px;top:266px;" width="6" height="10" viewBox="0 0 6 10" shape-rendering="crispEdges"><rect x="1" y="0" width="4" height="1" fill="#fff"/><rect x="0" y="1" width="2" height="1" fill="#fff"/><rect x="4" y="1" width="2" height="1" fill="#fff"/><rect x="0" y="2" width="2" height="1" fill="#fff"/><rect x="4" y="2" width="2" height="1" fill="#fff"/><rect x="0" y="3" width="2" height="1" fill="#fff"/><rect x="4" y="3" width="2" height="1" fill="#fff"/><rect x="1" y="4" width="4" height="1" fill="#fff"/><rect x="0" y="5" width="2" height="1" fill="#fff"/><rect x="4" y="5" width="2" height="1" fill="#fff"/><rect x="0" y="6" width="2" height="1" fill="#fff"/><rect x="4" y="6" width="2" height="1" fill="#fff"/><rect x="0" y="7" width="2" height="1" fill="#fff"/><rect x="4" y="7" width="2" height="1" fill="#fff"/><rect x="0" y="8" width="2" height="1" fill="#fff"/><rect x="4" y="8" width="2" height="1" fill="#fff"/><rect x="1" y="9" width="4" height="1" fill="#fff"/></svg>
<div style="left:632px;top:264px;width:16px;height:16px;background:#80ffff"></div>
<div style="left:632px;top:265px;width:13px;height:13px;background:#fff;box-shadow:inset 1px 1px 0 #808080,inset -1px -1px 0 #ffffff,inset 2px 2px 0 #404040,inset -2px -2px 0 #d4d0c8"></div>
<div style="left:657px;top:264px;width:14px;height:14px;border:1px solid #fff"></div>
<svg style="left:661px;top:266px;" width="6" height="10" viewBox="0 0 6 10" shape-rendering="crispEdges"><rect x="1" y="0" width="4" height="1" fill="#fff"/><rect x="0" y="1" width="2" height="1" fill="#fff"/><rect x="4" y="1" width="2" height="1" fill="#fff"/><rect x="0" y="2" width="2" height="1" fill="#fff"/><rect x="4" y="2" width="2" height="1" fill="#fff"/><rect x="0" y="3" width="2" height="1" fill="#fff"/><rect x="4" y="3" width="2" height="1" fill="#fff"/><rect x="0" y="4" width="2" height="1" fill="#fff"/><rect x="4" y="4" width="2" height="1" fill="#fff"/><rect x="1" y="5" width="5" height="1" fill="#fff"/><rect x="4" y="6" width="2" height="1" fill="#fff"/><rect x="4" y="7" width="2" height="1" fill="#fff"/><rect x="0" y="8" width="2" height="1" fill="#fff"/><rect x="4" y="8" width="2" height="1" fill="#fff"/><rect x="1" y="9" width="4" height="1" fill="#fff"/></svg>
<div style="left:678px;top:264px;width:16px;height:16px;background:#c0c0c0"></div>
<div style="left:678px;top:265px;width:13px;height:13px;background:#fff;box-shadow:inset 1px 1px 0 #808080,inset -1px -1px 0 #ffffff,inset 2px 2px 0 #404040,inset -2px -2px 0 #d4d0c8"></div>
<div style="left:715px;top:264px;width:14px;height:14px;border:1px solid #fff"></div>
<svg style="left:718px;top:266px;" width="8" height="10" viewBox="0 0 8 10" shape-rendering="crispEdges"><rect x="3" y="0" width="2" height="1" fill="#fff"/><rect x="3" y="1" width="2" height="1" fill="#fff"/><rect x="2" y="2" width="1" height="1" fill="#fff"/><rect x="5" y="2" width="1" height="1" fill="#fff"/><rect x="2" y="3" width="1" height="1" fill="#fff"/><rect x="5" y="3" width="1" height="1" fill="#fff"/><rect x="1" y="4" width="2" height="1" fill="#fff"/><rect x="5" y="4" width="2" height="1" fill="#fff"/><rect x="1" y="5" width="2" height="1" fill="#fff"/><rect x="5" y="5" width="2" height="1" fill="#fff"/><rect x="1" y="6" width="6" height="1" fill="#fff"/><rect x="0" y="7" width="2" height="1" fill="#fff"/><rect x="6" y="7" width="2" height="1" fill="#fff"/><rect x="0" y="8" width="2" height="1" fill="#fff"/><rect x="6" y="8" width="2" height="1" fill="#fff"/><rect x="0" y="9" width="2" height="1" fill="#fff"/><rect x="6" y="9" width="2" height="1" fill="#fff"/></svg>
<div style="left:739px;top:264px;width:14px;height:14px;border:1px solid #fff"></div>
<svg style="left:742px;top:266px;" width="8" height="10" viewBox="0 0 8 10" shape-rendering="crispEdges"><rect x="0" y="0" width="7" height="1" fill="#fff"/><rect x="0" y="1" width="2" height="1" fill="#fff"/><rect x="6" y="1" width="2" height="1" fill="#fff"/><rect x="0" y="2" width="2" height="1" fill="#fff"/><rect x="6" y="2" width="2" height="1" fill="#fff"/><rect x="0" y="3" width="2" height="1" fill="#fff"/><rect x="6" y="3" width="2" height="1" fill="#fff"/><rect x="0" y="4" width="7" height="1" fill="#fff"/><rect x="0" y="5" width="2" height="1" fill="#fff"/><rect x="6" y="5" width="2" height="1" fill="#fff"/><rect x="0" y="6" width="2" height="1" fill="#fff"/><rect x="6" y="6" width="2" height="1" fill="#fff"/><rect x="0" y="7" width="2" height="1" fill="#fff"/><rect x="6" y="7" width="2" height="1" fill="#fff"/><rect x="0" y="8" width="2" height="1" fill="#fff"/><rect x="6" y="8" width="2" height="1" fill="#fff"/><rect x="0" y="9" width="7" height="1" fill="#fff"/></svg>
<svg style="left:0px;top:0px;" width="830" height="647" viewBox="0 0 830 647" shape-rendering="crispEdges"><rect x="102" y="286" width="1" height="325" fill="#808080"/><rect x="133" y="286" width="1" height="325" fill="#808080"/><rect x="156" y="286" width="1" height="325" fill="#808080"/><rect x="175" y="286" width="1" height="325" fill="#808080"/><rect x="191" y="286" width="1" height="325" fill="#808080"/><rect x="205" y="286" width="1" height="325" fill="#808080"/><rect x="218" y="286" width="1" height="325" fill="#808080"/><rect x="229" y="286" width="1" height="325" fill="#808080"/><rect x="301" y="286" width="1" height="325" fill="#808080"/><rect x="344" y="286" width="1" height="325" fill="#808080"/><rect x="374" y="286" width="1" height="325" fill="#808080"/><rect x="397" y="286" width="1" height="325" fill="#808080"/><rect x="416" y="286" width="1" height="325" fill="#808080"/><rect x="432" y="286" width="1" height="325" fill="#808080"/><rect x="446" y="286" width="1" height="325" fill="#808080"/><rect x="459" y="286" width="1" height="325" fill="#808080"/><rect x="470" y="286" width="1" height="325" fill="#808080"/><rect x="542" y="286" width="1" height="325" fill="#808080"/><rect x="585" y="286" width="1" height="325" fill="#808080"/><rect x="615" y="286" width="1" height="325" fill="#808080"/><rect x="638" y="286" width="1" height="325" fill="#808080"/><rect x="657" y="286" width="1" height="325" fill="#808080"/><rect x="673" y="286" width="1" height="325" fill="#808080"/><rect x="687" y="286" width="1" height="325" fill="#808080"/><rect x="700" y="286" width="1" height="325" fill="#808080"/><rect x="711" y="286" width="1" height="325" fill="#808080"/><rect x="783" y="286" width="1" height="325" fill="#808080"/><rect x="60" y="286" width="735" height="1" fill="#808080"/><rect x="60" y="351" width="735" height="1" fill="#808080"/><rect x="60" y="416" width="735" height="1" fill="#808080"/><rect x="60" y="480" width="735" height="1" fill="#808080"/><rect x="60" y="545" width="735" height="1" fill="#808080"/><rect x="60" y="286" width="1" height="325" fill="#808080"/><rect x="794" y="286" width="1" height="325" fill="#808080"/><rect x="61" y="293" width="2" height="1" fill="#808080"/><rect x="792" y="293" width="2" height="1" fill="#808080"/><rect x="61" y="299" width="2" height="1" fill="#808080"/><rect x="792" y="299" width="2" height="1" fill="#808080"/><rect x="61" y="306" width="2" height="1" fill="#808080"/><rect x="792" y="306" width="2" height="1" fill="#808080"/><rect x="61" y="312" width="2" height="1" fill="#808080"/><rect x="792" y="312" width="2" height="1" fill="#808080"/><rect x="61" y="319" width="2" height="1" fill="#808080"/><rect x="792" y="319" width="2" height="1" fill="#808080"/><rect x="61" y="325" width="2" height="1" fill="#808080"/><rect x="792" y="325" width="2" height="1" fill="#808080"/><rect x="61" y="332" width="2" height="1" fill="#808080"/><rect x="792" y="332" width="2" height="1" fill="#808080"/><rect x="61" y="338" width="2" height="1" fill="#808080"/><rect x="792" y="338" width="2" height="1" fill="#808080"/><rect x="61" y="345" width="2" height="1" fill="#808080"/><rect x="792" y="345" width="2" height="1" fill="#808080"/><rect x="61" y="358" width="2" height="1" fill="#808080"/><rect x="792" y="358" width="2" height="1" fill="#808080"/><rect x="61" y="364" width="2" height="1" fill="#808080"/><rect x="792" y="364" width="2" height="1" fill="#808080"/><rect x="61" y="371" width="2" height="1" fill="#808080"/><rect x="792" y="371" width="2" height="1" fill="#808080"/><rect x="61" y="377" width="2" height="1" fill="#808080"/><rect x="792" y="377" width="2" height="1" fill="#808080"/><rect x="61" y="384" width="2" height="1" fill="#808080"/><rect x="792" y="384" width="2" height="1" fill="#808080"/><rect x="61" y="390" width="2" height="1" fill="#808080"/><rect x="792" y="390" width="2" height="1" fill="#808080"/><rect x="61" y="397" width="2" height="1" fill="#808080"/><rect x="792" y="397" width="2" height="1" fill="#808080"/><rect x="61" y="403" width="2" height="1" fill="#808080"/><rect x="792" y="403" width="2" height="1" fill="#808080"/><rect x="61" y="410" width="2" height="1" fill="#808080"/><rect x="792" y="410" width="2" height="1" fill="#808080"/><rect x="61" y="422" width="2" height="1" fill="#808080"/><rect x="792" y="422" width="2" height="1" fill="#808080"/><rect x="61" y="429" width="2" height="1" fill="#808080"/><rect x="792" y="429" width="2" height="1" fill="#808080"/><rect x="61" y="435" width="2" height="1" fill="#808080"/><rect x="792" y="435" width="2" height="1" fill="#808080"/><rect x="61" y="442" width="2" height="1" fill="#808080"/><rect x="792" y="442" width="2" height="1" fill="#808080"/><rect x="61" y="448" width="2" height="1" fill="#808080"/><rect x="792" y="448" width="2" height="1" fill="#808080"/><rect x="61" y="454" width="2" height="1" fill="#808080"/><rect x="792" y="454" width="2" height="1" fill="#808080"/><rect x="61" y="461" width="2" height="1" fill="#808080"/><rect x="792" y="461" width="2" height="1" fill="#808080"/><rect x="61" y="467" width="2" height="1" fill="#808080"/><rect x="792" y="467" width="2" height="1" fill="#808080"/><rect x="61" y="474" width="2" height="1" fill="#808080"/><rect x="792" y="474" width="2" height="1" fill="#808080"/><rect x="61" y="487" width="2" height="1" fill="#808080"/><rect x="792" y="487" width="2" height="1" fill="#808080"/><rect x="61" y="493" width="2" height="1" fill="#808080"/><rect x="792" y="493" width="2" height="1" fill="#808080"/><rect x="61" y="500" width="2" height="1" fill="#808080"/><rect x="792" y="500" width="2" height="1" fill="#808080"/><rect x="61" y="506" width="2" height="1" fill="#808080"/><rect x="792" y="506" width="2" height="1" fill="#808080"/><rect x="61" y="513" width="2" height="1" fill="#808080"/><rect x="792" y="513" width="2" height="1" fill="#808080"/><rect x="61" y="519" width="2" height="1" fill="#808080"/><rect x="792" y="519" width="2" height="1" fill="#808080"/><rect x="61" y="526" width="2" height="1" fill="#808080"/><rect x="792" y="526" width="2" height="1" fill="#808080"/><rect x="61" y="532" width="2" height="1" fill="#808080"/><rect x="792" y="532" width="2" height="1" fill="#808080"/><rect x="61" y="539" width="2" height="1" fill="#808080"/><rect x="792" y="539" width="2" height="1" fill="#808080"/><rect x="61" y="552" width="2" height="1" fill="#808080"/><rect x="792" y="552" width="2" height="1" fill="#808080"/><rect x="61" y="558" width="2" height="1" fill="#808080"/><rect x="792" y="558" width="2" height="1" fill="#808080"/><rect x="61" y="565" width="2" height="1" fill="#808080"/><rect x="792" y="565" width="2" height="1" fill="#808080"/><rect x="61" y="571" width="2" height="1" fill="#808080"/><rect x="792" y="571" width="2" height="1" fill="#808080"/><rect x="61" y="578" width="2" height="1" fill="#808080"/><rect x="792" y="578" width="2" height="1" fill="#808080"/><rect x="61" y="585" width="2" height="1" fill="#808080"/><rect x="792" y="585" width="2" height="1" fill="#808080"/><rect x="61" y="591" width="2" height="1" fill="#808080"/><rect x="792" y="591" width="2" height="1" fill="#808080"/><rect x="61" y="598" width="2" height="1" fill="#808080"/><rect x="792" y="598" width="2" height="1" fill="#808080"/><rect x="61" y="604" width="2" height="1" fill="#808080"/><rect x="792" y="604" width="2" height="1" fill="#808080"/><rect x="60" y="611" width="735" height="1" fill="#ffffa0"/><path d="M150.5 611.5 L150.5 605.5 L151.5 605.5 L151.5 593.5 L152.5 593.5 L152.5 581.5 L153.5 581.5 L153.5 574.5 L156.5 574.5 L156.5 581.5 L157.5 581.5 L157.5 593.5 L158.5 593.5 L158.5 605.5 L159.5 605.5 L159.5 611.5" fill="none" stroke="#ffffa0" stroke-width="1"/><rect x="473" y="329" width="1" height="283" fill="#ffffa0"/><rect x="472" y="376" width="1" height="95" fill="#ffffa0"/><rect x="471" y="470" width="1" height="142" fill="#ffffa0"/><rect x="470" y="564" width="1" height="48" fill="#ffffa0"/><rect x="469" y="571" width="1" height="21" fill="#ffffa0"/><rect x="468" y="591" width="1" height="21" fill="#ffffa0"/><rect x="542" y="573" width="1" height="39" fill="#ffffa0"/><rect x="545" y="531" width="1" height="81" fill="#ffffa0"/><rect x="546" y="572" width="1" height="40" fill="#ffffa0"/><rect x="582" y="604" width="1" height="8" fill="#ffffa0"/><rect x="583" y="590" width="1" height="15" fill="#ffffa0"/><rect x="584" y="576" width="1" height="15" fill="#ffffa0"/><rect x="585" y="569" width="1" height="43" fill="#ffffa0"/><rect x="586" y="576" width="1" height="36" fill="#ffffa0"/><rect x="612" y="607" width="1" height="5" fill="#ffffa0"/><rect x="613" y="597" width="1" height="11" fill="#ffffa0"/><rect x="614" y="588" width="1" height="24" fill="#ffffa0"/><rect x="615" y="583" width="1" height="29" fill="#ffffa0"/><rect x="636" y="607" width="1" height="5" fill="#ffffa0"/><rect x="637" y="599" width="1" height="9" fill="#ffffa0"/><rect x="638" y="594" width="1" height="18" fill="#ffffa0"/><rect x="639" y="603" width="1" height="9" fill="#ffffa0"/><rect x="657" y="602" width="1" height="10" fill="#ffffa0"/><rect x="658" y="607" width="1" height="5" fill="#ffffa0"/></svg>
<div style="right:774.5px;top:280.84px;font-size:12px;line-height:12px;color:#ffffc0;font-weight:normal;white-space:nowrap;transform:scaleX(.86);transform-origin:100% 50%">20.0</div>
<div style="right:774.5px;top:312.84px;font-size:12px;line-height:12px;color:#ffffc0;font-weight:normal;white-space:nowrap;transform:scaleX(.86);transform-origin:100% 50%">dBV</div>
<div style="right:774.5px;top:345.84px;font-size:12px;line-height:12px;color:#ffffc0;font-weight:normal;white-space:nowrap;transform:scaleX(.86);transform-origin:100% 50%">0.0</div>
<div style="right:774.5px;top:410.84px;font-size:12px;line-height:12px;color:#ffffc0;font-weight:normal;white-space:nowrap;transform:scaleX(.86);transform-origin:100% 50%">-20.0</div>
<div style="right:774.5px;top:474.84px;font-size:12px;line-height:12px;color:#ffffc0;font-weight:normal;white-space:nowrap;transform:scaleX(.86);transform-origin:100% 50%">-40.0</div>
<div style="right:774.5px;top:539.84px;font-size:12px;line-height:12px;color:#ffffc0;font-weight:normal;white-space:nowrap;transform:scaleX(.86);transform-origin:100% 50%">-60.0</div>
<div style="right:774.5px;top:604.84px;font-size:12px;line-height:12px;color:#ffffc0;font-weight:normal;white-space:nowrap;transform:scaleX(.86);transform-origin:100% 50%">-80.0</div>
<div style="left:-139.5px;width:400px;text-align:center;top:619.84px;font-size:12px;line-height:12px;color:#fff;font-weight:normal;white-space:nowrap;transform:scaleX(.86)">20</div>
<div style="left:29px;width:400px;text-align:center;top:619.84px;font-size:12px;line-height:12px;color:#fff;font-weight:normal;white-space:nowrap;transform:scaleX(.86)">100</div>
<div style="left:270.5px;width:400px;text-align:center;top:619.84px;font-size:12px;line-height:12px;color:#fff;font-weight:normal;white-space:nowrap;transform:scaleX(.86)">1k</div>
<div style="left:455px;width:400px;text-align:center;top:619.84px;font-size:12px;line-height:12px;color:#fff;font-weight:normal;white-space:nowrap;transform:scaleX(.86)">Hz</div>
<div style="left:511px;width:400px;text-align:center;top:619.84px;font-size:12px;line-height:12px;color:#fff;font-weight:normal;white-space:nowrap;transform:scaleX(.86)">10k</div>
<div style="left:583px;width:400px;text-align:center;top:619.84px;font-size:12px;line-height:12px;color:#fff;font-weight:normal;white-space:nowrap;transform:scaleX(.86)">20k</div>
</body></html>
